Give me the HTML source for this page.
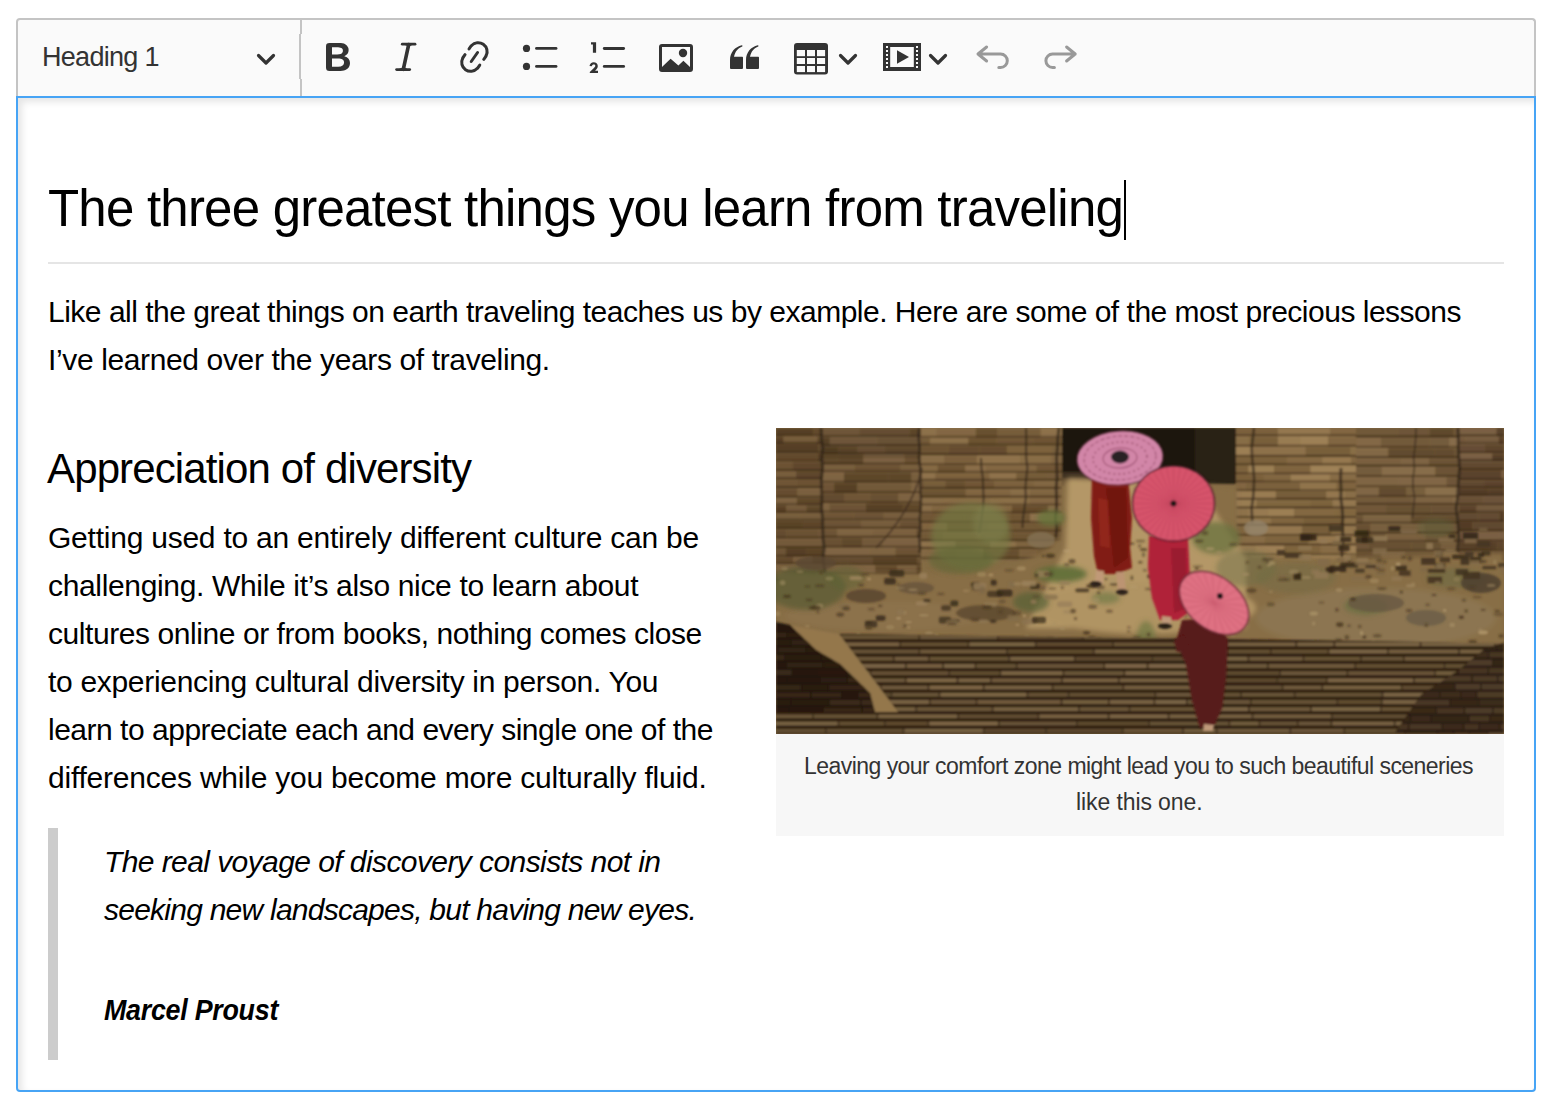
<!DOCTYPE html>
<html><head><meta charset="utf-8">
<style>
html,body{margin:0;padding:0;background:#fff;width:1556px;height:1112px;overflow:hidden;position:relative;font-family:"Liberation Sans",sans-serif;}
.abs{position:absolute;}
#toolbar{position:absolute;left:16px;top:18px;width:1516px;height:78px;background:#fafafa;border:2px solid #c4c4c4;border-bottom:none;border-radius:4px 4px 0 0;}
#editable{position:absolute;left:16px;top:96px;width:1516px;height:992px;border:2px solid #47a4f5;border-radius:0 0 4px 4px;box-shadow:inset 4px 4px 7px rgba(0,0,0,.1);background:#fff;}
.t{position:absolute;white-space:nowrap;color:#000;line-height:1;}
.p{font-size:30px;}
.bq{font-size:30px;font-style:italic;}
</style></head><body>
<div id="toolbar"></div>
<div id="editable"></div>
<svg class="abs" style="left:0;top:0" width="1556" height="100" viewBox="0 0 1556 100">
<rect x="300" y="20" width="2" height="14" fill="#c4c4c4"/><rect x="299" y="34" width="2" height="45" fill="#c4c4c4"/><rect x="300" y="79" width="2" height="17" fill="#c4c4c4"/>
<g fill="none" stroke="#333" stroke-width="3.2" stroke-linecap="round" stroke-linejoin="round">
<path d="M258.5 55.5 L266 63 L273.5 55.5"/>
<path d="M840.5 55.5 L848 63 L855.5 55.5"/>
<path d="M930.5 55.5 L938 63 L945.5 55.5"/>
</g>
<g fill="#333">
<path transform="translate(318,37) scale(2)" d="M10.187 17H5.773c-.637 0-1.092-.138-1.364-.415-.273-.277-.409-.718-.409-1.323V4.738c0-.617.14-1.062.419-1.332.279-.27.73-.406 1.354-.406h4.68c.69 0 1.288.041 1.793.124.506.083.96.242 1.36.478.341.197.644.447.906.75a3.262 3.262 0 0 1 .808 2.162c0 1.401-.722 2.426-2.167 3.075C15.05 10.175 16 11.315 16 13.01a3.756 3.756 0 0 1-2.296 3.504 6.1 6.1 0 0 1-1.517.377c-.571.073-1.238.11-2 .11zm-.217-6.217H7v4.087h3.069c1.977 0 2.965-.69 2.965-2.072 0-.707-.256-1.22-.768-1.537-.512-.319-1.277-.478-2.296-.478zM7 5.13v3.619h2.606c.729 0 1.292-.067 1.69-.2a1.6 1.6 0 0 0 .91-.765c.165-.267.247-.566.247-.897 0-.707-.26-1.176-.778-1.409-.519-.232-1.31-.348-2.375-.348H7z"/>
</g>
<g fill="none" stroke="#333" stroke-linecap="round" stroke-linejoin="round">
<path d="M402.3 44.2 L415 44.2" stroke-width="2.8"/>
<path d="M396.6 69.6 L409.7 69.6" stroke-width="2.8"/>
<path d="M408.7 44.5 L403.3 69.3" stroke-width="3.6"/>
<path d="M405.5 44.5 C407.8 44.8 408.6 46.5 408.0 48.5 M411.5 44.5 C409.6 44.8 408.9 46.2 408.6 47.5 M400.0 69.3 C402.2 69.0 403.2 67.8 403.8 66.0 M406.5 69.3 C404.8 69.0 404.2 67.6 404.3 66.5" stroke-width="1.4" fill="none"/>
</g>
<path fill="#333" transform="translate(454.4,37) scale(2)" d="M11.077 15l.991-1.416a.75.75 0 1 1 1.229.86l-1.148 1.64a.748.748 0 0 1-.217.206 5.251 5.251 0 0 1-8.503-5.955.741.741 0 0 1 .12-.274l1.147-1.639a.75.75 0 1 1 1.228.86L4.933 10.7l.006.003a3.75 3.75 0 0 0 6.132 4.294l.006.004zm5.494-5.335a.748.748 0 0 1-.12.274l-1.147 1.639a.75.75 0 1 1-1.228-.86l.86-1.23a3.75 3.75 0 0 0-6.144-4.301l-.86 1.229a.75.75 0 0 1-1.229-.86l1.148-1.64a.748.748 0 0 1 .217-.206 5.251 5.251 0 0 1 8.503 5.955zm-4.563-2.532a.75.75 0 0 1 .184 1.045l-3.155 4.505a.75.75 0 1 1-1.229-.86l3.155-4.506a.75.75 0 0 1 1.045-.184z"/>
<g fill="#333">
<circle cx="526.5" cy="48.4" r="3.6"/><circle cx="526.5" cy="66.4" r="3.6"/>
</g>
<g stroke="#333" stroke-width="2.9" stroke-linecap="round" fill="none">
<path d="M536.5 48.4 H556"/><path d="M536.5 66.4 H556"/>
<path d="M604.3 48.5 H623.6"/><path d="M604.3 66.4 H623.6"/>
</g>
<path fill="#333" d="M591 42.3 L596.1 42.3 L596.1 52.8 L592.9 52.8 L592.9 44.6 L591 44.6 Z"/>
<path fill="#333" d="M589.5 65.9 C589.9 63.7 591.6 62.2 593.6 62.2 C596.0 62.2 597.8 63.8 597.8 66.0 C597.8 67.6 596.9 68.9 595.6 70.2 L595.0 70.8 L598.0 70.8 L598.0 72.9 L589.8 72.9 L589.8 71.9 L593.9 68.0 C594.9 67.1 595.3 66.5 595.3 65.8 C595.3 64.9 594.6 64.4 593.7 64.4 C592.8 64.4 592.1 65.0 591.8 66.2 Z"/>
<rect x="660.5" y="45.5" width="31" height="25" rx="1.5" fill="none" stroke="#333" stroke-width="3"/>
<circle cx="683" cy="53" r="4.2" fill="#333"/>
<path fill="#333" d="M662 67 L670.6 58.8 L678.4 65.4 L683.4 60.8 L690 67 L690 70 L662 70 Z"/>
<g fill="#333">
<path d="M730 68 L730 60 C730 52.5 735 46.8 741.8 45.3 C742.5 45.2 742.8 46.2 742.2 46.5 C738.2 48 735 51.5 734 56.8 L742 56.8 C742.6 56.8 743 57.2 743 57.8 L743 68 C743 68.6 742.6 68.9 742 68.9 L731 68.9 C730.4 68.9 730 68.6 730 68 Z"/>
<path d="M746 68 L746 60 C746 52.5 751 46.8 757.8 45.3 C758.5 45.2 758.8 46.2 758.2 46.5 C754.2 48 751 51.5 750 56.8 L758 56.8 C758.6 56.8 759 57.2 759 57.8 L759 68 C759 68.6 758.6 68.9 758 68.9 L747 68.9 C746.4 68.9 746 68.6 746 68 Z"/>
</g>
<rect x="794" y="43" width="34" height="31.5" rx="3" fill="#333"/>
<g fill="#fafafa">
<rect x="796.8" y="50" width="8.2" height="6.2"/><rect x="807" y="50" width="8" height="6.2"/><rect x="817" y="50" width="8.1" height="6.2"/>
<rect x="796.8" y="58" width="8.2" height="6"/><rect x="807" y="58" width="8" height="6"/><rect x="817" y="58" width="8.1" height="6"/>
<rect x="796.8" y="66" width="8.2" height="6.1"/><rect x="807" y="66" width="8" height="6.1"/><rect x="817" y="66" width="8.1" height="6.1"/>
</g>
<rect x="883" y="43" width="38" height="28" fill="#333"/>
<rect x="890.2" y="47" width="23.6" height="20" fill="#fafafa"/>
<path d="M897 50.2 L909 57 L897 63.8 Z" fill="#333"/>
<g fill="#fafafa">
<rect x="886" y="46" width="2" height="2"/><rect x="886" y="50" width="2" height="2"/><rect x="886" y="54" width="2" height="2"/><rect x="886" y="58" width="2" height="2"/><rect x="886" y="62" width="2" height="2"/><rect x="886" y="66" width="2" height="2"/>
<rect x="916" y="46" width="2" height="2"/><rect x="916" y="50" width="2" height="2"/><rect x="916" y="54" width="2" height="2"/><rect x="916" y="58" width="2" height="2"/><rect x="916" y="62" width="2" height="2"/><rect x="916" y="66" width="2" height="2"/>
</g>
<g fill="none" stroke="#999" stroke-width="3" stroke-linecap="round" stroke-linejoin="round">
<path d="M986.6 47 L978 54 L986.6 61 M978 54 L1000.6 54 A6.7 6.7 0 0 1 1000.6 67.4 L998.8 67.4"/>
<path d="M1066.6 47 L1075.2 54 L1066.6 61 M1075.2 54 L1052.6 54 A6.7 6.7 0 0 0 1052.6 67.4 L1054.4 67.4"/>
</g>
</svg>
<div class="t" id="hd1" style="left:42px;top:43.5px;font-size:27px;letter-spacing:-0.7px;color:#333;">Heading 1</div>

<div class="t" id="h1" style="left:48px;top:183px;font-size:51px;letter-spacing:-0.78px;">The three greatest things you learn from traveling</div>
<div class="abs" style="left:1124px;top:180px;width:2px;height:60px;background:#000;"></div>
<div class="abs" style="left:48px;top:262px;width:1456px;height:2px;background:#e5e5e5;"></div>
<div class="t p" id="p1" style="left:48px;top:296.6px;font-size:30px;letter-spacing:-0.495px;">Like all the great things on earth traveling teaches us by example. Here are some of the most precious lessons</div>
<div class="t p" id="p2" style="left:48px;top:344.6px;font-size:30px;letter-spacing:-0.37px;">I&rsquo;ve learned over the years of traveling.</div>
<div class="t" id="h2" style="left:47px;top:448.2px;font-size:42px;letter-spacing:-0.87px;">Appreciation of diversity</div>
<div class="t p" id="l1" style="left:48px;top:522.6px;font-size:30px;letter-spacing:-0.235px;">Getting used to an entirely different culture can be</div>
<div class="t p" id="l2" style="left:48px;top:570.6px;font-size:30px;letter-spacing:-0.34px;">challenging. While it&rsquo;s also nice to learn about</div>
<div class="t p" id="l3" style="left:48px;top:618.6px;font-size:30px;letter-spacing:-0.43px;">cultures online or from books, nothing comes close</div>
<div class="t p" id="l4" style="left:48px;top:666.6px;font-size:30px;letter-spacing:-0.31px;">to experiencing cultural diversity in person. You</div>
<div class="t p" id="l5" style="left:48px;top:714.6px;font-size:30px;letter-spacing:-0.49px;">learn to appreciate each and every single one of the</div>
<div class="t p" id="l6" style="left:48px;top:762.6px;font-size:30px;letter-spacing:-0.22px;">differences while you become more culturally fluid.</div>
<div class="abs" style="left:48px;top:828px;width:10px;height:232px;background:#ccc;"></div>
<div class="t bq" id="q1" style="left:104px;top:846.6px;font-size:30px;letter-spacing:-0.58px;">The real voyage of discovery consists not in</div>
<div class="t bq" id="q2" style="left:104px;top:894.6px;font-size:30px;letter-spacing:-0.76px;">seeking new landscapes, but having new eyes.</div>
<div class="t bq" id="q3" style="left:104px;top:994.6px;font-size:30px;letter-spacing:-0.3px;font-weight:bold;transform:scaleX(0.895);transform-origin:0 0;">Marcel Proust</div>
<div class="abs" style="left:776px;top:734px;width:728px;height:102px;background:#f7f7f7;"></div>
<svg class="abs" id="photosvg" style="left:776px;top:428px" width="728" height="306" viewBox="0 0 728 306">
<defs><filter id="sf" x="-5%" y="-5%" width="110%" height="110%"><feGaussianBlur stdDeviation="0.8"/></filter><filter id="sf2" x="-20%" y="-20%" width="140%" height="140%"><feGaussianBlur stdDeviation="2.5"/></filter><filter id="sf3" x="-20%" y="-20%" width="140%" height="140%"><feGaussianBlur stdDeviation="5"/></filter><clipPath id="cp"><rect width="728" height="306"/></clipPath></defs>
<g clip-path="url(#cp)">
<rect width="728" height="306" fill="#8a7048"/>
<g filter="url(#sf)">
<rect x="0.0" y="0.0" width="37.6" height="8.5" fill="#594125"/>
<rect x="37.6" y="0.0" width="9.4" height="8.5" fill="#664c2f"/>
<rect x="0.0" y="6.3" width="47.0" height="2.2" fill="#3a2814" opacity="0.47"/>
<rect x="0.0" y="0.0" width="47.0" height="1.2" fill="#c9a77c" opacity="0.12"/>
<rect x="0.0" y="8.5" width="7.6" height="7.6" fill="#594126"/>
<rect x="7.6" y="8.5" width="33.7" height="7.6" fill="#7a5e3e"/>
<rect x="41.3" y="8.5" width="5.7" height="7.6" fill="#5f472a"/>
<rect x="0.0" y="13.9" width="47.0" height="2.2" fill="#3a2814" opacity="0.64"/>
<rect x="0.0" y="8.5" width="47.0" height="1.2" fill="#c9a77c" opacity="0.17"/>
<rect x="0.0" y="16.1" width="42.2" height="9.2" fill="#584025"/>
<rect x="42.2" y="16.1" width="4.8" height="9.2" fill="#62492d"/>
<rect x="0.0" y="23.1" width="47.0" height="2.2" fill="#3a2814" opacity="0.49"/>
<rect x="0.0" y="16.1" width="47.0" height="1.2" fill="#c9a77c" opacity="0.07"/>
<rect x="0.0" y="25.3" width="0.2" height="8.4" fill="#6f5536"/>
<rect x="0.2" y="25.3" width="41.6" height="8.4" fill="#664c2f"/>
<rect x="41.8" y="25.3" width="5.2" height="8.4" fill="#584025"/>
<rect x="0.0" y="31.5" width="47.0" height="2.2" fill="#3a2814" opacity="0.47"/>
<rect x="0.0" y="25.3" width="47.0" height="1.2" fill="#c9a77c" opacity="0.08"/>
<rect x="0.0" y="33.7" width="16.8" height="9.5" fill="#6f5536"/>
<rect x="16.8" y="33.7" width="30.2" height="9.5" fill="#634a2d"/>
<rect x="0.0" y="41.1" width="47.0" height="2.2" fill="#3a2814" opacity="0.69"/>
<rect x="0.0" y="33.7" width="47.0" height="1.2" fill="#c9a77c" opacity="0.14"/>
<rect x="0.0" y="43.3" width="20.2" height="8.2" fill="#7c6040"/>
<rect x="20.2" y="43.3" width="26.8" height="8.2" fill="#62492d"/>
<rect x="0.0" y="49.3" width="47.0" height="2.2" fill="#3a2814" opacity="0.74"/>
<rect x="0.0" y="43.3" width="47.0" height="1.2" fill="#c9a77c" opacity="0.07"/>
<rect x="0.0" y="51.5" width="0.9" height="8.8" fill="#6b5133"/>
<rect x="0.9" y="51.5" width="19.5" height="8.8" fill="#735839"/>
<rect x="20.4" y="51.5" width="26.6" height="8.8" fill="#6f5436"/>
<rect x="0.0" y="58.1" width="47.0" height="2.2" fill="#3a2814" opacity="0.71"/>
<rect x="0.0" y="51.5" width="47.0" height="1.2" fill="#c9a77c" opacity="0.09"/>
<rect x="0.0" y="60.3" width="21.6" height="9.6" fill="#6a5032"/>
<rect x="21.6" y="60.3" width="25.4" height="9.6" fill="#7f6342"/>
<rect x="0.0" y="67.7" width="47.0" height="2.2" fill="#3a2814" opacity="0.59"/>
<rect x="0.0" y="60.3" width="47.0" height="1.2" fill="#c9a77c" opacity="0.14"/>
<rect x="0.0" y="69.9" width="20.9" height="7.7" fill="#816544"/>
<rect x="20.9" y="69.9" width="26.1" height="7.7" fill="#62492c"/>
<rect x="0.0" y="75.3" width="47.0" height="2.2" fill="#3a2814" opacity="0.57"/>
<rect x="0.0" y="69.9" width="47.0" height="1.2" fill="#c9a77c" opacity="0.14"/>
<rect x="0.0" y="77.5" width="10.4" height="7.6" fill="#5b4227"/>
<rect x="10.4" y="77.5" width="20.2" height="7.6" fill="#775c3c"/>
<rect x="30.5" y="77.5" width="16.5" height="7.6" fill="#60482b"/>
<rect x="0.0" y="82.9" width="47.0" height="2.2" fill="#3a2814" opacity="0.57"/>
<rect x="0.0" y="77.5" width="47.0" height="1.2" fill="#c9a77c" opacity="0.16"/>
<rect x="0.0" y="85.1" width="24.9" height="7.7" fill="#7c6140"/>
<rect x="24.9" y="85.1" width="22.1" height="7.7" fill="#7c6040"/>
<rect x="0.0" y="90.6" width="47.0" height="2.2" fill="#3a2814" opacity="0.53"/>
<rect x="0.0" y="85.1" width="47.0" height="1.2" fill="#c9a77c" opacity="0.10"/>
<rect x="0.0" y="92.8" width="26.9" height="8.6" fill="#5c4428"/>
<rect x="26.9" y="92.8" width="20.1" height="8.6" fill="#60472b"/>
<rect x="0.0" y="99.2" width="47.0" height="2.2" fill="#3a2814" opacity="0.52"/>
<rect x="0.0" y="92.8" width="47.0" height="1.2" fill="#c9a77c" opacity="0.11"/>
<rect x="0.0" y="101.4" width="10.3" height="9.3" fill="#684e31"/>
<rect x="10.3" y="101.4" width="31.7" height="9.3" fill="#6e5436"/>
<rect x="41.9" y="101.4" width="5.1" height="9.3" fill="#74593a"/>
<rect x="0.0" y="108.5" width="47.0" height="2.2" fill="#3a2814" opacity="0.60"/>
<rect x="0.0" y="101.4" width="47.0" height="1.2" fill="#c9a77c" opacity="0.13"/>
<rect x="0.0" y="110.7" width="47.0" height="9.5" fill="#785d3d"/>
<rect x="0.0" y="118.0" width="47.0" height="2.2" fill="#3a2814" opacity="0.71"/>
<rect x="0.0" y="110.7" width="47.0" height="1.2" fill="#c9a77c" opacity="0.15"/>
<rect x="0.0" y="120.2" width="9.9" height="8.7" fill="#715738"/>
<rect x="9.9" y="120.2" width="20.3" height="8.7" fill="#584025"/>
<rect x="30.2" y="120.2" width="16.8" height="8.7" fill="#5d4428"/>
<rect x="0.0" y="126.7" width="47.0" height="2.2" fill="#3a2814" opacity="0.55"/>
<rect x="0.0" y="120.2" width="47.0" height="1.2" fill="#c9a77c" opacity="0.06"/>
<rect x="0.0" y="128.9" width="17.2" height="7.5" fill="#654c2f"/>
<rect x="17.2" y="128.9" width="18.9" height="7.5" fill="#7c6040"/>
<rect x="36.2" y="128.9" width="10.8" height="7.5" fill="#5c4428"/>
<rect x="0.0" y="134.2" width="47.0" height="2.2" fill="#3a2814" opacity="0.53"/>
<rect x="0.0" y="128.9" width="47.0" height="1.2" fill="#c9a77c" opacity="0.10"/>
<rect x="0.0" y="136.4" width="45.7" height="8.6" fill="#816544"/>
<rect x="45.7" y="136.4" width="1.3" height="8.6" fill="#6b5133"/>
<rect x="0.0" y="142.8" width="47.0" height="2.2" fill="#3a2814" opacity="0.48"/>
<rect x="0.0" y="136.4" width="47.0" height="1.2" fill="#c9a77c" opacity="0.06"/>
<rect x="0.0" y="145.0" width="40.7" height="8.5" fill="#5d4428"/>
<rect x="40.7" y="145.0" width="6.3" height="8.5" fill="#7f6342"/>
<rect x="0.0" y="151.3" width="47.0" height="2.2" fill="#3a2814" opacity="0.61"/>
<rect x="0.0" y="145.0" width="47.0" height="1.2" fill="#c9a77c" opacity="0.07"/>
<rect x="47.0" y="0.0" width="36.7" height="9.1" fill="#856846"/>
<rect x="83.7" y="0.0" width="49.9" height="9.1" fill="#785d3d"/>
<rect x="133.7" y="0.0" width="11.3" height="9.1" fill="#6a5032"/>
<rect x="47.0" y="6.9" width="98.0" height="2.2" fill="#3a2814" opacity="0.50"/>
<rect x="47.0" y="0.0" width="98.0" height="1.2" fill="#c9a77c" opacity="0.15"/>
<rect x="47.0" y="9.1" width="6.8" height="9.1" fill="#634b2d"/>
<rect x="53.8" y="9.1" width="48.0" height="9.1" fill="#856947"/>
<rect x="101.9" y="9.1" width="43.1" height="9.1" fill="#7d6241"/>
<rect x="47.0" y="16.0" width="98.0" height="2.2" fill="#3a2814" opacity="0.70"/>
<rect x="47.0" y="9.1" width="98.0" height="1.2" fill="#c9a77c" opacity="0.15"/>
<rect x="47.0" y="18.2" width="15.6" height="8.2" fill="#5b4327"/>
<rect x="62.6" y="18.2" width="19.0" height="8.2" fill="#664d2f"/>
<rect x="81.7" y="18.2" width="27.6" height="8.2" fill="#785d3d"/>
<rect x="109.2" y="18.2" width="35.8" height="8.2" fill="#6d5335"/>
<rect x="47.0" y="24.2" width="98.0" height="2.2" fill="#3a2814" opacity="0.73"/>
<rect x="47.0" y="18.2" width="98.0" height="1.2" fill="#c9a77c" opacity="0.18"/>
<rect x="47.0" y="26.4" width="15.2" height="10.4" fill="#634b2d"/>
<rect x="62.2" y="26.4" width="25.3" height="10.4" fill="#624a2d"/>
<rect x="87.5" y="26.4" width="41.1" height="10.4" fill="#816544"/>
<rect x="128.6" y="26.4" width="16.4" height="10.4" fill="#6f5536"/>
<rect x="47.0" y="34.6" width="98.0" height="2.2" fill="#3a2814" opacity="0.65"/>
<rect x="47.0" y="26.4" width="98.0" height="1.2" fill="#c9a77c" opacity="0.15"/>
<rect x="47.0" y="36.8" width="31.8" height="7.8" fill="#7c6140"/>
<rect x="78.8" y="36.8" width="45.8" height="7.8" fill="#6f5536"/>
<rect x="124.6" y="36.8" width="20.4" height="7.8" fill="#7c6140"/>
<rect x="47.0" y="42.3" width="98.0" height="2.2" fill="#3a2814" opacity="0.55"/>
<rect x="47.0" y="36.8" width="98.0" height="1.2" fill="#c9a77c" opacity="0.15"/>
<rect x="47.0" y="44.5" width="21.0" height="10.4" fill="#836745"/>
<rect x="68.0" y="44.5" width="44.8" height="10.4" fill="#61482c"/>
<rect x="112.8" y="44.5" width="22.7" height="10.4" fill="#60482b"/>
<rect x="135.5" y="44.5" width="9.5" height="10.4" fill="#7d6241"/>
<rect x="47.0" y="52.7" width="98.0" height="2.2" fill="#3a2814" opacity="0.49"/>
<rect x="47.0" y="44.5" width="98.0" height="1.2" fill="#c9a77c" opacity="0.16"/>
<rect x="47.0" y="54.9" width="11.2" height="10.4" fill="#725738"/>
<rect x="58.2" y="54.9" width="22.8" height="10.4" fill="#5a4226"/>
<rect x="81.1" y="54.9" width="53.9" height="10.4" fill="#765b3b"/>
<rect x="135.0" y="54.9" width="10.0" height="10.4" fill="#836745"/>
<rect x="47.0" y="63.2" width="98.0" height="2.2" fill="#3a2814" opacity="0.58"/>
<rect x="47.0" y="54.9" width="98.0" height="1.2" fill="#c9a77c" opacity="0.16"/>
<rect x="47.0" y="65.4" width="21.0" height="10.0" fill="#664d30"/>
<rect x="68.0" y="65.4" width="26.9" height="10.0" fill="#735939"/>
<rect x="94.9" y="65.4" width="27.6" height="10.0" fill="#6c5234"/>
<rect x="122.5" y="65.4" width="22.5" height="10.0" fill="#826644"/>
<rect x="47.0" y="73.2" width="98.0" height="2.2" fill="#3a2814" opacity="0.56"/>
<rect x="47.0" y="65.4" width="98.0" height="1.2" fill="#c9a77c" opacity="0.11"/>
<rect x="47.0" y="75.4" width="6.4" height="9.3" fill="#826644"/>
<rect x="53.4" y="75.4" width="36.6" height="9.3" fill="#715738"/>
<rect x="90.0" y="75.4" width="37.4" height="9.3" fill="#5a4227"/>
<rect x="127.4" y="75.4" width="17.6" height="9.3" fill="#62492c"/>
<rect x="47.0" y="82.4" width="98.0" height="2.2" fill="#3a2814" opacity="0.45"/>
<rect x="47.0" y="75.4" width="98.0" height="1.2" fill="#c9a77c" opacity="0.15"/>
<rect x="47.0" y="84.6" width="30.6" height="8.0" fill="#725838"/>
<rect x="77.6" y="84.6" width="30.1" height="8.0" fill="#705637"/>
<rect x="107.7" y="84.6" width="37.3" height="8.0" fill="#7c6140"/>
<rect x="47.0" y="90.4" width="98.0" height="2.2" fill="#3a2814" opacity="0.48"/>
<rect x="47.0" y="84.6" width="98.0" height="1.2" fill="#c9a77c" opacity="0.12"/>
<rect x="47.0" y="92.6" width="38.3" height="8.2" fill="#705637"/>
<rect x="85.3" y="92.6" width="38.8" height="8.2" fill="#7b603f"/>
<rect x="124.1" y="92.6" width="20.9" height="8.2" fill="#6d5335"/>
<rect x="47.0" y="98.7" width="98.0" height="2.2" fill="#3a2814" opacity="0.63"/>
<rect x="47.0" y="92.6" width="98.0" height="1.2" fill="#c9a77c" opacity="0.12"/>
<rect x="47.0" y="100.9" width="14.0" height="9.0" fill="#715738"/>
<rect x="61.0" y="100.9" width="35.7" height="9.0" fill="#836745"/>
<rect x="96.6" y="100.9" width="43.9" height="9.0" fill="#806443"/>
<rect x="140.5" y="100.9" width="4.5" height="9.0" fill="#654c2f"/>
<rect x="47.0" y="107.7" width="98.0" height="2.2" fill="#3a2814" opacity="0.62"/>
<rect x="47.0" y="100.9" width="98.0" height="1.2" fill="#c9a77c" opacity="0.17"/>
<rect x="47.0" y="109.9" width="18.4" height="10.0" fill="#6d5335"/>
<rect x="65.4" y="109.9" width="20.7" height="10.0" fill="#644b2e"/>
<rect x="86.1" y="109.9" width="20.7" height="10.0" fill="#775c3c"/>
<rect x="106.8" y="109.9" width="38.2" height="10.0" fill="#816544"/>
<rect x="47.0" y="117.7" width="98.0" height="2.2" fill="#3a2814" opacity="0.50"/>
<rect x="47.0" y="109.9" width="98.0" height="1.2" fill="#c9a77c" opacity="0.14"/>
<rect x="47.0" y="119.9" width="46.4" height="9.5" fill="#846846"/>
<rect x="93.4" y="119.9" width="26.1" height="9.5" fill="#836745"/>
<rect x="119.5" y="119.9" width="25.5" height="9.5" fill="#6f5536"/>
<rect x="47.0" y="127.2" width="98.0" height="2.2" fill="#3a2814" opacity="0.75"/>
<rect x="47.0" y="119.9" width="98.0" height="1.2" fill="#c9a77c" opacity="0.16"/>
<rect x="47.0" y="129.4" width="24.1" height="8.0" fill="#684f31"/>
<rect x="71.1" y="129.4" width="25.2" height="8.0" fill="#684e31"/>
<rect x="96.4" y="129.4" width="44.7" height="8.0" fill="#5a4227"/>
<rect x="141.1" y="129.4" width="3.9" height="8.0" fill="#6d5335"/>
<rect x="47.0" y="135.2" width="98.0" height="2.2" fill="#3a2814" opacity="0.46"/>
<rect x="47.0" y="129.4" width="98.0" height="1.2" fill="#c9a77c" opacity="0.09"/>
<rect x="47.0" y="137.4" width="5.0" height="9.4" fill="#856947"/>
<rect x="52.0" y="137.4" width="47.2" height="9.4" fill="#846846"/>
<rect x="99.2" y="137.4" width="21.9" height="9.4" fill="#654c2f"/>
<rect x="121.1" y="137.4" width="19.5" height="9.4" fill="#7c6140"/>
<rect x="140.5" y="137.4" width="4.5" height="9.4" fill="#5f472a"/>
<rect x="47.0" y="144.6" width="98.0" height="2.2" fill="#3a2814" opacity="0.58"/>
<rect x="47.0" y="137.4" width="98.0" height="1.2" fill="#c9a77c" opacity="0.17"/>
<rect x="145.0" y="0.0" width="15.8" height="10.0" fill="#92744d"/>
<rect x="160.8" y="0.0" width="39.1" height="10.0" fill="#886b46"/>
<rect x="199.9" y="0.0" width="21.3" height="10.0" fill="#6c5231"/>
<rect x="221.2" y="0.0" width="43.5" height="10.0" fill="#7c613d"/>
<rect x="264.7" y="0.0" width="20.7" height="10.0" fill="#93754e"/>
<rect x="285.3" y="0.0" width="0.7" height="10.0" fill="#8d6f49"/>
<rect x="145.0" y="7.8" width="141.0" height="2.2" fill="#3a2814" opacity="0.48"/>
<rect x="145.0" y="0.0" width="141.0" height="1.2" fill="#c9a77c" opacity="0.16"/>
<rect x="145.0" y="10.0" width="8.9" height="7.7" fill="#785d3a"/>
<rect x="153.9" y="10.0" width="38.5" height="7.7" fill="#92744e"/>
<rect x="192.4" y="10.0" width="27.9" height="7.7" fill="#6f5533"/>
<rect x="220.3" y="10.0" width="37.5" height="7.7" fill="#745937"/>
<rect x="257.8" y="10.0" width="22.0" height="7.7" fill="#715634"/>
<rect x="279.8" y="10.0" width="6.2" height="7.7" fill="#725836"/>
<rect x="145.0" y="15.5" width="141.0" height="2.2" fill="#3a2814" opacity="0.54"/>
<rect x="145.0" y="10.0" width="141.0" height="1.2" fill="#c9a77c" opacity="0.09"/>
<rect x="145.0" y="17.7" width="27.8" height="9.8" fill="#715735"/>
<rect x="172.8" y="17.7" width="30.8" height="9.8" fill="#6a5030"/>
<rect x="203.6" y="17.7" width="27.3" height="9.8" fill="#6a5030"/>
<rect x="230.9" y="17.7" width="45.1" height="9.8" fill="#826641"/>
<rect x="276.0" y="17.7" width="10.0" height="9.8" fill="#7e633f"/>
<rect x="145.0" y="25.2" width="141.0" height="2.2" fill="#3a2814" opacity="0.73"/>
<rect x="145.0" y="17.7" width="141.0" height="1.2" fill="#c9a77c" opacity="0.06"/>
<rect x="145.0" y="27.4" width="23.3" height="10.0" fill="#8e714b"/>
<rect x="168.3" y="27.4" width="32.5" height="10.0" fill="#806440"/>
<rect x="200.9" y="27.4" width="43.4" height="10.0" fill="#95774f"/>
<rect x="244.3" y="27.4" width="30.7" height="10.0" fill="#8e714a"/>
<rect x="275.0" y="27.4" width="11.0" height="10.0" fill="#856944"/>
<rect x="145.0" y="35.2" width="141.0" height="2.2" fill="#3a2814" opacity="0.57"/>
<rect x="145.0" y="27.4" width="141.0" height="1.2" fill="#c9a77c" opacity="0.10"/>
<rect x="145.0" y="37.4" width="16.7" height="7.7" fill="#8a6d47"/>
<rect x="161.7" y="37.4" width="27.5" height="7.7" fill="#715634"/>
<rect x="189.2" y="37.4" width="21.1" height="7.7" fill="#8f714b"/>
<rect x="210.3" y="37.4" width="50.2" height="7.7" fill="#876a45"/>
<rect x="260.5" y="37.4" width="25.5" height="7.7" fill="#745937"/>
<rect x="145.0" y="42.9" width="141.0" height="2.2" fill="#3a2814" opacity="0.54"/>
<rect x="145.0" y="37.4" width="141.0" height="1.2" fill="#c9a77c" opacity="0.11"/>
<rect x="145.0" y="45.1" width="14.4" height="8.0" fill="#94764f"/>
<rect x="159.4" y="45.1" width="54.0" height="8.0" fill="#826541"/>
<rect x="213.4" y="45.1" width="27.0" height="8.0" fill="#94764f"/>
<rect x="240.4" y="45.1" width="29.5" height="8.0" fill="#795e3b"/>
<rect x="269.9" y="45.1" width="16.1" height="8.0" fill="#7a5f3c"/>
<rect x="145.0" y="50.8" width="141.0" height="2.2" fill="#3a2814" opacity="0.59"/>
<rect x="145.0" y="45.1" width="141.0" height="1.2" fill="#c9a77c" opacity="0.12"/>
<rect x="145.0" y="53.0" width="3.0" height="8.1" fill="#755a38"/>
<rect x="148.0" y="53.0" width="21.3" height="8.1" fill="#7b603c"/>
<rect x="169.4" y="53.0" width="19.5" height="8.1" fill="#6a5130"/>
<rect x="188.9" y="53.0" width="29.3" height="8.1" fill="#745937"/>
<rect x="218.2" y="53.0" width="39.7" height="8.1" fill="#816540"/>
<rect x="257.8" y="53.0" width="28.2" height="8.1" fill="#866a45"/>
<rect x="145.0" y="58.9" width="141.0" height="2.2" fill="#3a2814" opacity="0.66"/>
<rect x="145.0" y="53.0" width="141.0" height="1.2" fill="#c9a77c" opacity="0.16"/>
<rect x="145.0" y="61.1" width="44.7" height="8.7" fill="#705634"/>
<rect x="189.7" y="61.1" width="44.8" height="8.7" fill="#866944"/>
<rect x="234.4" y="61.1" width="19.6" height="8.7" fill="#8e714b"/>
<rect x="254.1" y="61.1" width="31.9" height="8.7" fill="#856944"/>
<rect x="145.0" y="67.6" width="141.0" height="2.2" fill="#3a2814" opacity="0.67"/>
<rect x="145.0" y="61.1" width="141.0" height="1.2" fill="#c9a77c" opacity="0.16"/>
<rect x="145.0" y="69.8" width="20.9" height="7.9" fill="#8e714b"/>
<rect x="165.9" y="69.8" width="47.8" height="7.9" fill="#8e704a"/>
<rect x="213.7" y="69.8" width="39.6" height="7.9" fill="#91734c"/>
<rect x="253.3" y="69.8" width="32.7" height="7.9" fill="#886b46"/>
<rect x="145.0" y="75.5" width="141.0" height="2.2" fill="#3a2814" opacity="0.52"/>
<rect x="145.0" y="69.8" width="141.0" height="1.2" fill="#c9a77c" opacity="0.05"/>
<rect x="145.0" y="77.7" width="11.1" height="7.9" fill="#8e714b"/>
<rect x="156.1" y="77.7" width="38.7" height="7.9" fill="#856944"/>
<rect x="194.7" y="77.7" width="41.2" height="7.9" fill="#876b45"/>
<rect x="235.9" y="77.7" width="36.1" height="7.9" fill="#6a502f"/>
<rect x="272.0" y="77.7" width="14.0" height="7.9" fill="#8a6d48"/>
<rect x="145.0" y="83.4" width="141.0" height="2.2" fill="#3a2814" opacity="0.60"/>
<rect x="145.0" y="77.7" width="141.0" height="1.2" fill="#c9a77c" opacity="0.12"/>
<rect x="145.0" y="85.6" width="43.3" height="9.5" fill="#755a37"/>
<rect x="188.3" y="85.6" width="20.8" height="9.5" fill="#755a38"/>
<rect x="209.0" y="85.6" width="45.0" height="9.5" fill="#735836"/>
<rect x="254.0" y="85.6" width="32.0" height="9.5" fill="#94764f"/>
<rect x="145.0" y="92.9" width="141.0" height="2.2" fill="#3a2814" opacity="0.60"/>
<rect x="145.0" y="85.6" width="141.0" height="1.2" fill="#c9a77c" opacity="0.10"/>
<rect x="145.0" y="95.1" width="25.9" height="8.9" fill="#856843"/>
<rect x="170.9" y="95.1" width="41.8" height="8.9" fill="#6d5332"/>
<rect x="212.6" y="95.1" width="23.5" height="8.9" fill="#755a37"/>
<rect x="236.1" y="95.1" width="45.5" height="8.9" fill="#775c39"/>
<rect x="281.6" y="95.1" width="4.4" height="8.9" fill="#6a502f"/>
<rect x="145.0" y="101.8" width="141.0" height="2.2" fill="#3a2814" opacity="0.47"/>
<rect x="145.0" y="95.1" width="141.0" height="1.2" fill="#c9a77c" opacity="0.08"/>
<rect x="145.0" y="104.0" width="22.2" height="9.5" fill="#765b39"/>
<rect x="167.2" y="104.0" width="37.1" height="9.5" fill="#7e623e"/>
<rect x="204.3" y="104.0" width="35.3" height="9.5" fill="#6f5433"/>
<rect x="239.6" y="104.0" width="46.4" height="9.5" fill="#725836"/>
<rect x="145.0" y="111.3" width="141.0" height="2.2" fill="#3a2814" opacity="0.74"/>
<rect x="145.0" y="104.0" width="141.0" height="1.2" fill="#c9a77c" opacity="0.17"/>
<rect x="145.0" y="113.5" width="34.6" height="7.6" fill="#94764f"/>
<rect x="179.6" y="113.5" width="34.6" height="7.6" fill="#755a38"/>
<rect x="214.2" y="113.5" width="25.8" height="7.6" fill="#93754e"/>
<rect x="240.0" y="113.5" width="25.8" height="7.6" fill="#836742"/>
<rect x="265.8" y="113.5" width="20.2" height="7.6" fill="#816440"/>
<rect x="145.0" y="118.9" width="141.0" height="2.2" fill="#3a2814" opacity="0.74"/>
<rect x="145.0" y="113.5" width="141.0" height="1.2" fill="#c9a77c" opacity="0.07"/>
<rect x="145.0" y="121.1" width="35.6" height="10.0" fill="#886c46"/>
<rect x="180.6" y="121.1" width="26.6" height="10.0" fill="#91734d"/>
<rect x="207.1" y="121.1" width="36.0" height="10.0" fill="#6b5130"/>
<rect x="243.1" y="121.1" width="18.1" height="10.0" fill="#7f633f"/>
<rect x="261.2" y="121.1" width="24.8" height="10.0" fill="#775c39"/>
<rect x="145.0" y="128.9" width="141.0" height="2.2" fill="#3a2814" opacity="0.49"/>
<rect x="145.0" y="121.1" width="141.0" height="1.2" fill="#c9a77c" opacity="0.09"/>
<rect x="460.0" y="0.0" width="41.9" height="8.4" fill="#80643f"/>
<rect x="501.9" y="0.0" width="52.3" height="8.4" fill="#9a7c53"/>
<rect x="554.2" y="0.0" width="25.8" height="8.4" fill="#876b45"/>
<rect x="460.0" y="6.2" width="120.0" height="2.2" fill="#3a2814" opacity="0.56"/>
<rect x="460.0" y="0.0" width="120.0" height="1.2" fill="#c9a77c" opacity="0.10"/>
<rect x="460.0" y="8.4" width="13.7" height="10.5" fill="#8d7149"/>
<rect x="473.7" y="8.4" width="28.2" height="10.5" fill="#7d623d"/>
<rect x="501.9" y="8.4" width="21.8" height="10.5" fill="#9f8157"/>
<rect x="523.6" y="8.4" width="28.6" height="10.5" fill="#a4855a"/>
<rect x="552.2" y="8.4" width="27.2" height="10.5" fill="#866a44"/>
<rect x="579.4" y="8.4" width="0.6" height="10.5" fill="#836741"/>
<rect x="460.0" y="16.7" width="120.0" height="2.2" fill="#3a2814" opacity="0.56"/>
<rect x="460.0" y="8.4" width="120.0" height="1.2" fill="#c9a77c" opacity="0.17"/>
<rect x="460.0" y="18.9" width="17.0" height="10.2" fill="#a38459"/>
<rect x="477.0" y="18.9" width="52.8" height="10.2" fill="#93754d"/>
<rect x="529.8" y="18.9" width="44.6" height="10.2" fill="#7d623d"/>
<rect x="574.4" y="18.9" width="5.6" height="10.2" fill="#8e724a"/>
<rect x="460.0" y="26.9" width="120.0" height="2.2" fill="#3a2814" opacity="0.68"/>
<rect x="460.0" y="18.9" width="120.0" height="1.2" fill="#c9a77c" opacity="0.13"/>
<rect x="460.0" y="29.1" width="50.8" height="8.4" fill="#80653f"/>
<rect x="510.8" y="29.1" width="35.5" height="8.4" fill="#8a6d46"/>
<rect x="546.3" y="29.1" width="29.0" height="8.4" fill="#9b7d53"/>
<rect x="575.3" y="29.1" width="4.7" height="8.4" fill="#866a44"/>
<rect x="460.0" y="35.3" width="120.0" height="2.2" fill="#3a2814" opacity="0.65"/>
<rect x="460.0" y="29.1" width="120.0" height="1.2" fill="#c9a77c" opacity="0.09"/>
<rect x="460.0" y="37.5" width="12.4" height="9.2" fill="#826640"/>
<rect x="472.4" y="37.5" width="25.7" height="9.2" fill="#a28459"/>
<rect x="498.1" y="37.5" width="36.4" height="9.2" fill="#846842"/>
<rect x="534.4" y="37.5" width="45.6" height="9.2" fill="#a6875c"/>
<rect x="460.0" y="44.4" width="120.0" height="2.2" fill="#3a2814" opacity="0.58"/>
<rect x="460.0" y="37.5" width="120.0" height="1.2" fill="#c9a77c" opacity="0.07"/>
<rect x="460.0" y="46.6" width="27.9" height="8.1" fill="#7f633e"/>
<rect x="487.9" y="46.6" width="26.8" height="8.1" fill="#866a44"/>
<rect x="514.8" y="46.6" width="39.1" height="8.1" fill="#a28358"/>
<rect x="553.9" y="46.6" width="26.1" height="8.1" fill="#8d7049"/>
<rect x="460.0" y="52.5" width="120.0" height="2.2" fill="#3a2814" opacity="0.57"/>
<rect x="460.0" y="46.6" width="120.0" height="1.2" fill="#c9a77c" opacity="0.12"/>
<rect x="460.0" y="54.7" width="10.2" height="8.6" fill="#876b44"/>
<rect x="470.2" y="54.7" width="53.8" height="8.6" fill="#80653f"/>
<rect x="524.0" y="54.7" width="36.6" height="8.6" fill="#967950"/>
<rect x="560.6" y="54.7" width="19.4" height="8.6" fill="#846842"/>
<rect x="460.0" y="61.1" width="120.0" height="2.2" fill="#3a2814" opacity="0.53"/>
<rect x="460.0" y="54.7" width="120.0" height="1.2" fill="#c9a77c" opacity="0.08"/>
<rect x="460.0" y="63.3" width="39.9" height="8.7" fill="#a08157"/>
<rect x="499.9" y="63.3" width="50.3" height="8.7" fill="#7b613c"/>
<rect x="550.2" y="63.3" width="19.2" height="8.7" fill="#9a7c52"/>
<rect x="569.4" y="63.3" width="10.6" height="8.7" fill="#8f724b"/>
<rect x="460.0" y="69.8" width="120.0" height="2.2" fill="#3a2814" opacity="0.63"/>
<rect x="460.0" y="63.3" width="120.0" height="1.2" fill="#c9a77c" opacity="0.05"/>
<rect x="460.0" y="72.0" width="20.7" height="8.7" fill="#a08257"/>
<rect x="480.7" y="72.0" width="54.0" height="8.7" fill="#856a43"/>
<rect x="534.7" y="72.0" width="22.0" height="8.7" fill="#816640"/>
<rect x="556.7" y="72.0" width="23.3" height="8.7" fill="#997b52"/>
<rect x="460.0" y="78.5" width="120.0" height="2.2" fill="#3a2814" opacity="0.73"/>
<rect x="460.0" y="72.0" width="120.0" height="1.2" fill="#c9a77c" opacity="0.14"/>
<rect x="460.0" y="80.7" width="12.0" height="9.4" fill="#93764d"/>
<rect x="472.0" y="80.7" width="19.5" height="9.4" fill="#9d7f55"/>
<rect x="491.4" y="80.7" width="26.6" height="9.4" fill="#a38459"/>
<rect x="518.0" y="80.7" width="41.9" height="9.4" fill="#886c45"/>
<rect x="559.9" y="80.7" width="20.1" height="9.4" fill="#866a43"/>
<rect x="460.0" y="88.0" width="120.0" height="2.2" fill="#3a2814" opacity="0.64"/>
<rect x="460.0" y="80.7" width="120.0" height="1.2" fill="#c9a77c" opacity="0.14"/>
<rect x="460.0" y="90.2" width="35.3" height="7.8" fill="#94774e"/>
<rect x="495.3" y="90.2" width="32.4" height="7.8" fill="#846942"/>
<rect x="527.7" y="90.2" width="40.2" height="7.8" fill="#7b603b"/>
<rect x="567.9" y="90.2" width="12.1" height="7.8" fill="#8f724a"/>
<rect x="460.0" y="95.8" width="120.0" height="2.2" fill="#3a2814" opacity="0.74"/>
<rect x="460.0" y="90.2" width="120.0" height="1.2" fill="#c9a77c" opacity="0.13"/>
<rect x="460.0" y="98.0" width="12.4" height="10.2" fill="#856943"/>
<rect x="472.4" y="98.0" width="53.5" height="10.2" fill="#9a7c52"/>
<rect x="526.0" y="98.0" width="29.4" height="10.2" fill="#7b613c"/>
<rect x="555.3" y="98.0" width="24.7" height="10.2" fill="#987a51"/>
<rect x="460.0" y="105.9" width="120.0" height="2.2" fill="#3a2814" opacity="0.58"/>
<rect x="460.0" y="98.0" width="120.0" height="1.2" fill="#c9a77c" opacity="0.08"/>
<rect x="460.0" y="108.1" width="29.1" height="9.5" fill="#8d7049"/>
<rect x="489.1" y="108.1" width="43.3" height="9.5" fill="#836842"/>
<rect x="532.4" y="108.1" width="47.5" height="9.5" fill="#9b7d53"/>
<rect x="579.9" y="108.1" width="0.1" height="9.5" fill="#846842"/>
<rect x="460.0" y="115.4" width="120.0" height="2.2" fill="#3a2814" opacity="0.74"/>
<rect x="460.0" y="108.1" width="120.0" height="1.2" fill="#c9a77c" opacity="0.09"/>
<rect x="460.0" y="117.6" width="19.3" height="10.0" fill="#9c7e54"/>
<rect x="479.3" y="117.6" width="28.9" height="10.0" fill="#a4855a"/>
<rect x="508.2" y="117.6" width="36.3" height="10.0" fill="#836741"/>
<rect x="544.5" y="117.6" width="26.3" height="10.0" fill="#8d7049"/>
<rect x="570.8" y="117.6" width="9.2" height="10.0" fill="#a4855a"/>
<rect x="460.0" y="125.4" width="120.0" height="2.2" fill="#3a2814" opacity="0.49"/>
<rect x="460.0" y="117.6" width="120.0" height="1.2" fill="#c9a77c" opacity="0.10"/>
<rect x="460.0" y="127.6" width="14.3" height="8.1" fill="#8c6f48"/>
<rect x="474.3" y="127.6" width="51.2" height="8.1" fill="#a18358"/>
<rect x="525.5" y="127.6" width="45.1" height="8.1" fill="#a6875c"/>
<rect x="570.6" y="127.6" width="9.4" height="8.1" fill="#896d46"/>
<rect x="460.0" y="133.5" width="120.0" height="2.2" fill="#3a2814" opacity="0.51"/>
<rect x="460.0" y="127.6" width="120.0" height="1.2" fill="#c9a77c" opacity="0.17"/>
<rect x="580.0" y="0.0" width="41.6" height="9.7" fill="#745b3b"/>
<rect x="621.6" y="0.0" width="31.8" height="9.7" fill="#72593a"/>
<rect x="653.5" y="0.0" width="24.3" height="9.7" fill="#644c2f"/>
<rect x="677.7" y="0.0" width="5.3" height="9.7" fill="#735a3b"/>
<rect x="580.0" y="7.5" width="103.0" height="2.2" fill="#3a2814" opacity="0.74"/>
<rect x="580.0" y="0.0" width="103.0" height="1.2" fill="#c9a77c" opacity="0.07"/>
<rect x="580.0" y="9.7" width="25.0" height="10.4" fill="#886c4a"/>
<rect x="605.0" y="9.7" width="48.4" height="10.4" fill="#775d3d"/>
<rect x="653.4" y="9.7" width="19.8" height="10.4" fill="#785e3f"/>
<rect x="673.2" y="9.7" width="9.8" height="10.4" fill="#8c704d"/>
<rect x="580.0" y="17.9" width="103.0" height="2.2" fill="#3a2814" opacity="0.51"/>
<rect x="580.0" y="9.7" width="103.0" height="1.2" fill="#c9a77c" opacity="0.10"/>
<rect x="580.0" y="20.1" width="32.3" height="10.2" fill="#876c4a"/>
<rect x="612.3" y="20.1" width="46.4" height="10.2" fill="#654d30"/>
<rect x="658.7" y="20.1" width="19.3" height="10.2" fill="#664e31"/>
<rect x="677.9" y="20.1" width="5.1" height="10.2" fill="#6f5637"/>
<rect x="580.0" y="28.1" width="103.0" height="2.2" fill="#3a2814" opacity="0.67"/>
<rect x="580.0" y="20.1" width="103.0" height="1.2" fill="#c9a77c" opacity="0.17"/>
<rect x="580.0" y="30.3" width="45.3" height="8.5" fill="#7f6443"/>
<rect x="625.3" y="30.3" width="27.7" height="8.5" fill="#836847"/>
<rect x="653.0" y="30.3" width="29.7" height="8.5" fill="#705738"/>
<rect x="682.7" y="30.3" width="0.3" height="8.5" fill="#856a48"/>
<rect x="580.0" y="36.6" width="103.0" height="2.2" fill="#3a2814" opacity="0.72"/>
<rect x="580.0" y="30.3" width="103.0" height="1.2" fill="#c9a77c" opacity="0.13"/>
<rect x="580.0" y="38.8" width="25.9" height="10.3" fill="#785f3f"/>
<rect x="605.9" y="38.8" width="53.4" height="10.3" fill="#8d714e"/>
<rect x="659.3" y="38.8" width="23.7" height="10.3" fill="#6f5637"/>
<rect x="580.0" y="47.0" width="103.0" height="2.2" fill="#3a2814" opacity="0.58"/>
<rect x="580.0" y="38.8" width="103.0" height="1.2" fill="#c9a77c" opacity="0.11"/>
<rect x="580.0" y="49.2" width="42.2" height="10.3" fill="#846947"/>
<rect x="622.2" y="49.2" width="48.4" height="10.3" fill="#866a49"/>
<rect x="670.6" y="49.2" width="12.4" height="10.3" fill="#72593a"/>
<rect x="580.0" y="57.3" width="103.0" height="2.2" fill="#3a2814" opacity="0.55"/>
<rect x="580.0" y="49.2" width="103.0" height="1.2" fill="#c9a77c" opacity="0.10"/>
<rect x="580.0" y="59.5" width="22.9" height="9.8" fill="#856a48"/>
<rect x="602.9" y="59.5" width="27.2" height="9.8" fill="#664e31"/>
<rect x="630.1" y="59.5" width="19.3" height="9.8" fill="#7c6241"/>
<rect x="649.3" y="59.5" width="30.1" height="9.8" fill="#8f734f"/>
<rect x="679.4" y="59.5" width="3.6" height="9.8" fill="#8f7350"/>
<rect x="580.0" y="67.1" width="103.0" height="2.2" fill="#3a2814" opacity="0.53"/>
<rect x="580.0" y="59.5" width="103.0" height="1.2" fill="#c9a77c" opacity="0.06"/>
<rect x="580.0" y="69.3" width="29.3" height="7.8" fill="#775d3e"/>
<rect x="609.3" y="69.3" width="26.7" height="7.8" fill="#765c3d"/>
<rect x="636.0" y="69.3" width="41.0" height="7.8" fill="#816645"/>
<rect x="676.9" y="69.3" width="6.1" height="7.8" fill="#896d4b"/>
<rect x="580.0" y="74.9" width="103.0" height="2.2" fill="#3a2814" opacity="0.65"/>
<rect x="580.0" y="69.3" width="103.0" height="1.2" fill="#c9a77c" opacity="0.07"/>
<rect x="580.0" y="77.1" width="30.2" height="10.0" fill="#745a3b"/>
<rect x="610.2" y="77.1" width="45.3" height="10.0" fill="#6c5436"/>
<rect x="655.5" y="77.1" width="27.2" height="10.0" fill="#6e5537"/>
<rect x="682.6" y="77.1" width="0.4" height="10.0" fill="#8a6f4c"/>
<rect x="580.0" y="84.9" width="103.0" height="2.2" fill="#3a2814" opacity="0.62"/>
<rect x="580.0" y="77.1" width="103.0" height="1.2" fill="#c9a77c" opacity="0.09"/>
<rect x="580.0" y="87.1" width="7.0" height="8.7" fill="#6e5537"/>
<rect x="587.0" y="87.1" width="47.9" height="8.7" fill="#806645"/>
<rect x="634.9" y="87.1" width="48.1" height="8.7" fill="#685032"/>
<rect x="580.0" y="93.6" width="103.0" height="2.2" fill="#3a2814" opacity="0.59"/>
<rect x="580.0" y="87.1" width="103.0" height="1.2" fill="#c9a77c" opacity="0.16"/>
<rect x="580.0" y="95.8" width="14.5" height="10.0" fill="#6c5335"/>
<rect x="594.5" y="95.8" width="54.0" height="10.0" fill="#7d6342"/>
<rect x="648.5" y="95.8" width="34.5" height="10.0" fill="#745a3b"/>
<rect x="580.0" y="103.6" width="103.0" height="2.2" fill="#3a2814" opacity="0.71"/>
<rect x="580.0" y="95.8" width="103.0" height="1.2" fill="#c9a77c" opacity="0.11"/>
<rect x="580.0" y="105.8" width="29.7" height="8.3" fill="#685032"/>
<rect x="609.7" y="105.8" width="40.1" height="8.3" fill="#7f6443"/>
<rect x="649.7" y="105.8" width="26.1" height="8.3" fill="#745a3b"/>
<rect x="675.8" y="105.8" width="7.2" height="8.3" fill="#6c5436"/>
<rect x="580.0" y="111.9" width="103.0" height="2.2" fill="#3a2814" opacity="0.53"/>
<rect x="580.0" y="105.8" width="103.0" height="1.2" fill="#c9a77c" opacity="0.13"/>
<rect x="580.0" y="114.1" width="12.3" height="9.5" fill="#72593a"/>
<rect x="592.3" y="114.1" width="43.1" height="9.5" fill="#6c5335"/>
<rect x="635.4" y="114.1" width="29.6" height="9.5" fill="#6c5436"/>
<rect x="665.0" y="114.1" width="18.0" height="9.5" fill="#7c6141"/>
<rect x="580.0" y="121.4" width="103.0" height="2.2" fill="#3a2814" opacity="0.47"/>
<rect x="580.0" y="114.1" width="103.0" height="1.2" fill="#c9a77c" opacity="0.06"/>
<rect x="580.0" y="123.6" width="25.1" height="8.7" fill="#684f32"/>
<rect x="605.1" y="123.6" width="24.1" height="8.7" fill="#826746"/>
<rect x="629.2" y="123.6" width="33.2" height="8.7" fill="#705738"/>
<rect x="662.4" y="123.6" width="20.6" height="8.7" fill="#8d714e"/>
<rect x="580.0" y="130.0" width="103.0" height="2.2" fill="#3a2814" opacity="0.54"/>
<rect x="580.0" y="123.6" width="103.0" height="1.2" fill="#c9a77c" opacity="0.12"/>
<rect x="683.0" y="0.0" width="37.5" height="8.6" fill="#7f6347"/>
<rect x="720.5" y="0.0" width="7.5" height="8.6" fill="#5c442d"/>
<rect x="683.0" y="6.4" width="45.0" height="2.2" fill="#3a2814" opacity="0.67"/>
<rect x="683.0" y="0.0" width="45.0" height="1.2" fill="#c9a77c" opacity="0.08"/>
<rect x="683.0" y="8.6" width="6.6" height="7.5" fill="#785c41"/>
<rect x="689.6" y="8.6" width="33.0" height="7.5" fill="#7a5f43"/>
<rect x="722.7" y="8.6" width="5.3" height="7.5" fill="#5b422b"/>
<rect x="683.0" y="13.9" width="45.0" height="2.2" fill="#3a2814" opacity="0.45"/>
<rect x="683.0" y="8.6" width="45.0" height="1.2" fill="#c9a77c" opacity="0.12"/>
<rect x="683.0" y="16.1" width="25.7" height="9.4" fill="#6a5037"/>
<rect x="708.7" y="16.1" width="19.3" height="9.4" fill="#60472f"/>
<rect x="683.0" y="23.3" width="45.0" height="2.2" fill="#3a2814" opacity="0.61"/>
<rect x="683.0" y="16.1" width="45.0" height="1.2" fill="#c9a77c" opacity="0.17"/>
<rect x="683.0" y="25.5" width="33.1" height="7.8" fill="#7e6246"/>
<rect x="716.1" y="25.5" width="11.9" height="7.8" fill="#59412a"/>
<rect x="683.0" y="31.1" width="45.0" height="2.2" fill="#3a2814" opacity="0.73"/>
<rect x="683.0" y="25.5" width="45.0" height="1.2" fill="#c9a77c" opacity="0.18"/>
<rect x="683.0" y="33.3" width="45.0" height="8.9" fill="#654b33"/>
<rect x="683.0" y="40.1" width="45.0" height="2.2" fill="#3a2814" opacity="0.72"/>
<rect x="683.0" y="33.3" width="45.0" height="1.2" fill="#c9a77c" opacity="0.13"/>
<rect x="683.0" y="42.3" width="42.3" height="10.0" fill="#5d442d"/>
<rect x="725.3" y="42.3" width="2.7" height="10.0" fill="#795d42"/>
<rect x="683.0" y="50.1" width="45.0" height="2.2" fill="#3a2814" opacity="0.70"/>
<rect x="683.0" y="42.3" width="45.0" height="1.2" fill="#c9a77c" opacity="0.07"/>
<rect x="683.0" y="52.3" width="25.2" height="8.2" fill="#644b33"/>
<rect x="708.2" y="52.3" width="19.8" height="8.2" fill="#5e452e"/>
<rect x="683.0" y="58.2" width="45.0" height="2.2" fill="#3a2814" opacity="0.67"/>
<rect x="683.0" y="52.3" width="45.0" height="1.2" fill="#c9a77c" opacity="0.17"/>
<rect x="683.0" y="60.4" width="29.2" height="7.6" fill="#553d27"/>
<rect x="712.2" y="60.4" width="15.8" height="7.6" fill="#59402a"/>
<rect x="683.0" y="65.8" width="45.0" height="2.2" fill="#3a2814" opacity="0.63"/>
<rect x="683.0" y="60.4" width="45.0" height="1.2" fill="#c9a77c" opacity="0.12"/>
<rect x="683.0" y="68.0" width="24.4" height="9.4" fill="#6d5339"/>
<rect x="707.4" y="68.0" width="20.6" height="9.4" fill="#70563c"/>
<rect x="683.0" y="75.2" width="45.0" height="2.2" fill="#3a2814" opacity="0.58"/>
<rect x="683.0" y="68.0" width="45.0" height="1.2" fill="#c9a77c" opacity="0.11"/>
<rect x="683.0" y="77.4" width="17.5" height="7.6" fill="#5e452e"/>
<rect x="700.5" y="77.4" width="27.5" height="7.6" fill="#765b40"/>
<rect x="683.0" y="82.8" width="45.0" height="2.2" fill="#3a2814" opacity="0.59"/>
<rect x="683.0" y="77.4" width="45.0" height="1.2" fill="#c9a77c" opacity="0.07"/>
<rect x="683.0" y="85.0" width="19.5" height="8.9" fill="#664d34"/>
<rect x="702.5" y="85.0" width="21.4" height="8.9" fill="#674d35"/>
<rect x="723.9" y="85.0" width="4.1" height="8.9" fill="#553d27"/>
<rect x="683.0" y="91.7" width="45.0" height="2.2" fill="#3a2814" opacity="0.64"/>
<rect x="683.0" y="85.0" width="45.0" height="1.2" fill="#c9a77c" opacity="0.06"/>
<rect x="683.0" y="93.9" width="13.6" height="9.7" fill="#563e28"/>
<rect x="696.6" y="93.9" width="31.4" height="9.7" fill="#644b32"/>
<rect x="683.0" y="101.4" width="45.0" height="2.2" fill="#3a2814" opacity="0.74"/>
<rect x="683.0" y="93.9" width="45.0" height="1.2" fill="#c9a77c" opacity="0.07"/>
<rect x="683.0" y="103.6" width="15.2" height="10.1" fill="#775c41"/>
<rect x="698.2" y="103.6" width="25.2" height="10.1" fill="#7f6346"/>
<rect x="723.4" y="103.6" width="4.6" height="10.1" fill="#7e6246"/>
<rect x="683.0" y="111.5" width="45.0" height="2.2" fill="#3a2814" opacity="0.72"/>
<rect x="683.0" y="103.6" width="45.0" height="1.2" fill="#c9a77c" opacity="0.07"/>
<rect x="683.0" y="113.7" width="38.5" height="9.9" fill="#5a422b"/>
<rect x="721.5" y="113.7" width="6.5" height="9.9" fill="#60472f"/>
<rect x="683.0" y="121.3" width="45.0" height="2.2" fill="#3a2814" opacity="0.69"/>
<rect x="683.0" y="113.7" width="45.0" height="1.2" fill="#c9a77c" opacity="0.07"/>
<rect x="683.0" y="123.5" width="34.8" height="9.0" fill="#624831"/>
<rect x="717.8" y="123.5" width="10.2" height="9.0" fill="#5c432c"/>
<rect x="683.0" y="130.4" width="45.0" height="2.2" fill="#3a2814" opacity="0.50"/>
<rect x="683.0" y="123.5" width="45.0" height="1.2" fill="#c9a77c" opacity="0.17"/>
<rect x="47" y="0" width="98" height="30" fill="#3a2a1c" opacity=".25"/>
<polyline points="45.0,0.0 45.5,10.0 46.7,20.0 45.7,30.0 46.6,40.0 45.4,50.0 45.5,60.0 45.9,70.0 45.5,80.0 46.6,90.0 46.8,100.0 47.0,110.0 48.2,120.0 47.0,130.0 48.5,140.0 48.9,145.0" fill="none" stroke="#2e2218" stroke-width="3.0" opacity=".7"/>
<polyline points="143.0,0.0 142.7,10.0 143.6,20.0 142.9,30.0 144.3,40.0 144.6,50.0 144.2,60.0 144.9,70.0 144.8,80.0 143.8,90.0 144.5,100.0 143.2,110.0 144.1,120.0 143.4,125.0" fill="none" stroke="#2e2218" stroke-width="2.5" opacity=".7"/>
<polyline points="205.0,30.0 205.4,40.0 206.9,50.0 207.1,60.0 207.6,70.0 207.1,80.0 205.6,90.0 204.2,100.0 203.1,105.0" fill="none" stroke="#2e2218" stroke-width="2.0" opacity=".7"/>
<polyline points="250.0,0.0 250.3,10.0 250.1,20.0 250.2,30.0 251.4,40.0 250.3,50.0 249.4,60.0 249.9,70.0 248.5,80.0 247.0,90.0 246.5,100.0" fill="none" stroke="#2e2218" stroke-width="2.0" opacity=".7"/>
<polyline points="283.0,0.0 281.8,10.0 281.4,20.0 280.6,30.0 280.8,40.0 281.1,50.0 280.2,60.0 280.6,70.0 280.5,80.0 279.4,90.0 280.7,100.0 279.9,110.0" fill="none" stroke="#2e2218" stroke-width="3.0" opacity=".7"/>
<polyline points="478.0,0.0 476.9,10.0 475.7,20.0 476.1,30.0 477.3,40.0 478.1,50.0 477.8,60.0 477.1,70.0 475.6,80.0 476.1,90.0 476.3,95.0" fill="none" stroke="#2e2218" stroke-width="2.5" opacity=".7"/>
<polyline points="565.0,40.0 564.6,50.0 565.0,60.0 564.8,70.0 566.1,80.0 566.8,90.0 566.1,100.0 567.3,110.0 565.9,120.0 566.0,130.0" fill="none" stroke="#2e2218" stroke-width="3.0" opacity=".7"/>
<polyline points="640.0,0.0 639.7,10.0 638.9,20.0 637.6,30.0 638.4,40.0 637.0,50.0 637.1,60.0 638.5,70.0 637.4,80.0 636.5,90.0" fill="none" stroke="#2e2218" stroke-width="1.5" opacity=".7"/>
<polyline points="682.0,0.0 682.3,10.0 682.3,20.0 682.8,30.0 683.7,40.0 682.7,50.0 682.2,60.0 681.6,70.0 680.2,80.0 681.4,90.0 682.2,100.0 682.9,110.0 681.4,120.0 682.4,125.0" fill="none" stroke="#2e2218" stroke-width="3.0" opacity=".7"/>
<path d="M146 40 C140 70 120 100 100 120" fill="none" stroke="#3a2a1e" stroke-width="2" opacity=".6"/>
<rect x="286" y="0" width="174" height="50" fill="#1a130c"/>
<rect x="286" y="0" width="174" height="10" fill="#1a130d"/>
<rect x="413" y="0" width="6" height="50" fill="#1a140f"/>
<rect x="419" y="0" width="41" height="56" fill="#2a2018"/>
<rect x="286" y="44" width="130" height="14" fill="#4a3a26" opacity=".8"/>
</g>
<g filter="url(#sf2)">
<path d="M0 142 L47 145 L145 146 L236 140 L270 122 L286 108 L286 52 L420 56 L460 60 L460 128 L560 130 L690 126 L728 124 L728 218 L645 220 L63 208 L0 196 Z" fill="#8e7248"/>
<path d="M292 50 L420 55 L470 130 L470 200 L250 200 L290 120 Z" fill="#bc9e6c"/>
<ellipse cx="370" cy="180" rx="110" ry="26" fill="#b89a68"/>
<ellipse cx="600" cy="190" rx="120" ry="30" fill="#927a54"/>
<ellipse cx="110" cy="188" rx="100" ry="14" fill="#927650"/>
</g>
<g filter="url(#sf2)">
<ellipse cx="195" cy="108" rx="40" ry="34" fill="#7c8248" opacity="0.60"/>
<ellipse cx="185" cy="132" rx="32" ry="14" fill="#646a38" opacity="0.60"/>
<ellipse cx="215" cy="95" rx="18" ry="20" fill="#8a8e55" opacity="0.40"/>
<ellipse cx="30" cy="160" rx="40" ry="22" fill="#545a30" opacity="0.60"/>
<ellipse cx="70" cy="150" rx="18" ry="12" fill="#60663a" opacity="0.50"/>
<ellipse cx="275" cy="90" rx="14" ry="8" fill="#6a7a40" opacity="0.80"/>
<ellipse cx="285" cy="146" rx="26" ry="8" fill="#5c6e36" opacity="0.85"/>
<ellipse cx="255" cy="174" rx="18" ry="10" fill="#5a6538" opacity="0.70"/>
<ellipse cx="330" cy="170" rx="14" ry="6" fill="#6d7c45" opacity="0.60"/>
<ellipse cx="440" cy="110" rx="24" ry="16" fill="#6c7642" opacity="0.75"/>
<ellipse cx="470" cy="140" rx="30" ry="18" fill="#70744a" opacity="0.45"/>
<ellipse cx="520" cy="150" rx="40" ry="16" fill="#6f7048" opacity="0.35"/>
<ellipse cx="590" cy="178" rx="22" ry="9" fill="#667040" opacity="0.60"/>
<ellipse cx="680" cy="150" rx="30" ry="10" fill="#6c6e48" opacity="0.50"/>
<ellipse cx="370" cy="215" rx="10" ry="22" fill="#6f7a44" opacity="0.70"/>
<ellipse cx="660" cy="100" rx="18" ry="10" fill="#60683e" opacity="0.40"/>
</g>
<g filter="url(#sf)">
<ellipse cx="210" cy="185" rx="30" ry="8" fill="#5e4a30" opacity=".8"/>
<ellipse cx="90" cy="168" rx="20" ry="7" fill="#5a4630" opacity=".8"/>
<ellipse cx="265" cy="112" rx="14" ry="8" fill="#8a7658" opacity=".8"/>
<ellipse cx="650" cy="190" rx="20" ry="8" fill="#6e604a" opacity=".8"/>
<ellipse cx="140" cy="160" rx="18" ry="6" fill="#6a5640" opacity=".8"/>
<ellipse cx="40" cy="135" rx="20" ry="7" fill="#5e4a34" opacity=".8"/>
<ellipse cx="480" cy="100" rx="12" ry="8" fill="#9a8a70" opacity=".8"/>
<ellipse cx="705" cy="155" rx="20" ry="10" fill="#4e4030" opacity=".8"/>
<ellipse cx="600" cy="175" rx="28" ry="9" fill="#6a5a44" opacity=".8"/>
<rect x="669.9" y="120.6" width="8.7" height="3.4" fill="#8a714e" opacity=".85"/>
<rect x="553.0" y="97.1" width="14.3" height="6.4" fill="#413220" opacity=".85"/>
<rect x="662.3" y="109.6" width="15.5" height="5.1" fill="#89704e" opacity=".85"/>
<rect x="560.5" y="130.3" width="16.6" height="3.1" fill="#816948" opacity=".85"/>
<rect x="559.4" y="108.0" width="15.0" height="4.3" fill="#9c815c" opacity=".85"/>
<rect x="700.7" y="113.1" width="13.6" height="5.8" fill="#453523" opacity=".85"/>
<rect x="651.7" y="148.8" width="14.4" height="6.4" fill="#443422" opacity=".85"/>
<rect x="599.7" y="134.9" width="8.5" height="5.5" fill="#856c4a" opacity=".85"/>
<rect x="517.7" y="145.1" width="7.3" height="6.7" fill="#302213" opacity=".85"/>
<rect x="578.6" y="102.8" width="14.3" height="5.5" fill="#302313" opacity=".85"/>
<rect x="658.9" y="135.5" width="10.4" height="6.3" fill="#3e2e1d" opacity=".85"/>
<rect x="686.9" y="144.0" width="17.0" height="6.8" fill="#443422" opacity=".85"/>
<rect x="524.4" y="106.3" width="16.2" height="6.2" fill="#302213" opacity=".85"/>
<rect x="644.6" y="140.4" width="7.2" height="3.4" fill="#846c4a" opacity=".85"/>
<rect x="672.7" y="106.3" width="6.3" height="4.0" fill="#3a2b1a" opacity=".85"/>
<rect x="564.4" y="134.4" width="17.6" height="5.0" fill="#372918" opacity=".85"/>
<rect x="694.1" y="129.0" width="11.2" height="6.1" fill="#392b1a" opacity=".85"/>
<rect x="579.1" y="133.8" width="16.3" height="3.4" fill="#816948" opacity=".85"/>
<rect x="686.9" y="104.4" width="15.1" height="6.9" fill="#342616" opacity=".85"/>
<rect x="501.0" y="122.0" width="8.2" height="5.0" fill="#433321" opacity=".85"/>
<rect x="579.2" y="140.8" width="9.4" height="3.9" fill="#463623" opacity=".85"/>
<rect x="659.5" y="122.4" width="7.0" height="6.2" fill="#3f2f1e" opacity=".85"/>
<rect x="659.0" y="138.3" width="10.8" height="4.6" fill="#866e4c" opacity=".85"/>
<rect x="703.0" y="99.7" width="8.5" height="4.1" fill="#7a6343" opacity=".85"/>
<rect x="705.5" y="122.6" width="8.8" height="4.8" fill="#453522" opacity=".85"/>
<rect x="621.2" y="136.5" width="10.2" height="4.3" fill="#917753" opacity=".85"/>
<rect x="535.4" y="141.4" width="8.0" height="4.8" fill="#947a56" opacity=".85"/>
<rect x="676.3" y="126.9" width="16.6" height="4.0" fill="#3b2c1b" opacity=".85"/>
<rect x="543.7" y="111.6" width="7.9" height="3.6" fill="#987e59" opacity=".85"/>
<rect x="556.4" y="113.0" width="9.9" height="3.8" fill="#7f6846" opacity=".85"/>
<rect x="722.3" y="135.1" width="7.2" height="4.5" fill="#473624" opacity=".85"/>
<rect x="724.3" y="138.7" width="8.4" height="5.6" fill="#89704e" opacity=".85"/>
<rect x="524.4" y="106.4" width="10.8" height="6.2" fill="#302213" opacity=".85"/>
<rect x="658.1" y="122.5" width="7.7" height="5.4" fill="#8a714f" opacity=".85"/>
<rect x="592.3" y="135.8" width="12.9" height="6.0" fill="#89704e" opacity=".85"/>
<rect x="596.0" y="107.6" width="15.3" height="5.8" fill="#997f5a" opacity=".85"/>
<rect x="694.4" y="132.4" width="9.8" height="5.5" fill="#8a714e" opacity=".85"/>
<rect x="522.3" y="118.1" width="13.6" height="4.0" fill="#937955" opacity=".85"/>
<rect x="596.6" y="120.0" width="14.1" height="6.7" fill="#88704d" opacity=".85"/>
<rect x="541.7" y="131.0" width="11.9" height="6.9" fill="#876f4c" opacity=".85"/>
<rect x="508.7" y="124.9" width="17.3" height="5.1" fill="#423321" opacity=".85"/>
<rect x="523.0" y="126.6" width="12.1" height="5.6" fill="#937a55" opacity=".85"/>
<rect x="689.0" y="123.7" width="8.5" height="5.7" fill="#463624" opacity=".85"/>
<rect x="589.5" y="136.9" width="10.3" height="3.2" fill="#473724" opacity=".85"/>
<rect x="562.6" y="117.0" width="11.0" height="5.8" fill="#3a2b1a" opacity=".85"/>
<rect x="580.3" y="109.6" width="17.3" height="5.1" fill="#413220" opacity=".85"/>
<rect x="549.9" y="139.1" width="7.6" height="6.1" fill="#352616" opacity=".85"/>
<rect x="684.6" y="129.9" width="8.7" height="6.9" fill="#3d2e1d" opacity=".85"/>
<rect x="580.5" y="130.1" width="11.6" height="4.2" fill="#977d58" opacity=".85"/>
<rect x="625.0" y="101.9" width="16.2" height="4.1" fill="#866e4c" opacity=".85"/>
<rect x="585.8" y="108.9" width="6.0" height="5.9" fill="#342616" opacity=".85"/>
<rect x="564.1" y="108.5" width="11.1" height="5.5" fill="#3b2c1b" opacity=".85"/>
<rect x="650.3" y="114.9" width="6.7" height="6.3" fill="#987e59" opacity=".85"/>
<rect x="706.5" y="138.1" width="13.6" height="3.1" fill="#433421" opacity=".85"/>
<rect x="502.6" y="147.3" width="7.2" height="3.6" fill="#836a49" opacity=".85"/>
<rect x="553.3" y="137.7" width="16.8" height="6.2" fill="#332515" opacity=".85"/>
<rect x="538.3" y="144.0" width="14.0" height="6.6" fill="#967c57" opacity=".85"/>
<rect x="679.7" y="141.1" width="12.4" height="6.0" fill="#40311f" opacity=".85"/>
<rect x="600.0" y="143.5" width="8.8" height="3.6" fill="#836b49" opacity=".85"/>
<rect x="612.4" y="98.2" width="11.9" height="5.0" fill="#332515" opacity=".85"/>
<rect x="623.0" y="142.5" width="11.6" height="5.3" fill="#443422" opacity=".85"/>
<rect x="651.7" y="141.2" width="17.5" height="3.3" fill="#3a2b1a" opacity=".85"/>
<rect x="645.2" y="130.0" width="14.2" height="6.7" fill="#3e2f1d" opacity=".85"/>
<rect x="575.3" y="149.0" width="16.8" height="3.1" fill="#8b724f" opacity=".85"/>
<rect x="663.7" y="129.4" width="10.4" height="4.9" fill="#443422" opacity=".85"/>
<rect x="619.8" y="137.4" width="11.1" height="5.2" fill="#3a2b1a" opacity=".85"/>
<rect x="688.5" y="111.1" width="12.0" height="4.1" fill="#886f4d" opacity=".85"/>
<rect x="615.5" y="148.6" width="10.0" height="4.3" fill="#967c57" opacity=".85"/>
<rect x="568.2" y="127.3" width="6.5" height="5.9" fill="#967c57" opacity=".85"/>
<rect x="701.9" y="125.0" width="6.1" height="3.8" fill="#372818" opacity=".85"/>
<rect x="281.1" y="173.5" width="15.1" height="5.4" rx="2" fill="#a0865f" opacity=".8"/>
<rect x="208.0" y="174.5" width="12.8" height="3.9" rx="2" fill="#99805a" opacity=".8"/>
<rect x="220.1" y="165.2" width="7.8" height="3.1" rx="2" fill="#87704d" opacity=".8"/>
<rect x="245.9" y="190.3" width="14.2" height="6.1" rx="2" fill="#917854" opacity=".8"/>
<rect x="194.9" y="154.2" width="9.2" height="4.7" rx="2" fill="#3c2e1c" opacity=".8"/>
<rect x="214.0" y="191.4" width="6.4" height="3.5" rx="2" fill="#3f311f" opacity=".8"/>
<rect x="254.5" y="171.6" width="6.1" height="4.5" rx="2" fill="#947b56" opacity=".8"/>
<rect x="202.1" y="191.6" width="10.1" height="3.4" rx="2" fill="#957c57" opacity=".8"/>
<rect x="214.7" y="151.7" width="6.0" height="5.7" rx="2" fill="#322515" opacity=".8"/>
<rect x="89.2" y="193.1" width="7.3" height="3.1" rx="2" fill="#463724" opacity=".8"/>
<rect x="232.6" y="153.3" width="6.5" height="6.1" rx="2" fill="#8a724f" opacity=".8"/>
<rect x="231.3" y="187.1" width="12.3" height="5.8" rx="2" fill="#876f4c" opacity=".8"/>
<rect x="170.5" y="191.3" width="13.2" height="3.0" rx="2" fill="#493a26" opacity=".8"/>
<rect x="63.5" y="175.8" width="9.1" height="5.9" rx="2" fill="#866f4c" opacity=".8"/>
<rect x="99.8" y="187.4" width="9.7" height="5.3" rx="2" fill="#332616" opacity=".8"/>
<rect x="165.3" y="177.2" width="9.6" height="5.6" rx="2" fill="#453623" opacity=".8"/>
<rect x="211.1" y="163.0" width="15.4" height="6.1" rx="2" fill="#443623" opacity=".8"/>
<rect x="196.0" y="156.1" width="13.0" height="6.3" rx="2" fill="#493a26" opacity=".8"/>
<rect x="139.7" y="173.3" width="12.0" height="4.2" rx="2" fill="#a18760" opacity=".8"/>
<rect x="162.9" y="188.8" width="12.0" height="6.6" rx="2" fill="#423321" opacity=".8"/>
<rect x="253.8" y="155.6" width="10.2" height="5.3" rx="2" fill="#382a19" opacity=".8"/>
<rect x="255.8" y="188.8" width="14.1" height="6.5" rx="2" fill="#453723" opacity=".8"/>
<rect x="197.3" y="155.1" width="12.8" height="6.7" rx="2" fill="#a18660" opacity=".8"/>
<rect x="143.2" y="144.7" width="8.0" height="6.0" rx="2" fill="#a08660" opacity=".8"/>
<rect x="283.6" y="152.9" width="10.7" height="3.8" rx="2" fill="#9c825c" opacity=".8"/>
<rect x="121.1" y="181.3" width="6.9" height="6.2" rx="2" fill="#947b56" opacity=".8"/>
<rect x="245.3" y="152.8" width="14.9" height="5.1" rx="2" fill="#a48962" opacity=".8"/>
<rect x="174.4" y="172.4" width="7.8" height="5.8" rx="2" fill="#362918" opacity=".8"/>
<rect x="147.1" y="171.0" width="7.5" height="3.2" rx="2" fill="#3e301e" opacity=".8"/>
<rect x="299.3" y="160.6" width="13.9" height="3.6" rx="2" fill="#413220" opacity=".8"/>
<rect x="203.3" y="159.0" width="6.3" height="7.0" rx="2" fill="#846d4b" opacity=".8"/>
<rect x="267.9" y="166.7" width="13.8" height="4.7" rx="2" fill="#8d7551" opacity=".8"/>
<rect x="287.2" y="182.2" width="8.5" height="3.2" rx="2" fill="#a68c64" opacity=".8"/>
<rect x="108.2" y="149.9" width="11.6" height="6.5" rx="2" fill="#332615" opacity=".8"/>
<rect x="170.0" y="192.1" width="12.0" height="4.6" rx="2" fill="#866e4c" opacity=".8"/>
<rect x="88.8" y="192.8" width="12.4" height="6.8" rx="2" fill="#3f311f" opacity=".8"/>
<rect x="220.7" y="161.6" width="15.7" height="7.0" rx="2" fill="#352817" opacity=".8"/>
<rect x="113.2" y="142.1" width="15.0" height="6.6" rx="2" fill="#3a2c1b" opacity=".8"/>
<rect x="260.9" y="142.6" width="12.5" height="6.9" rx="2" fill="#9d835d" opacity=".8"/>
<rect x="73.4" y="148.0" width="12.8" height="4.2" rx="2" fill="#a58b63" opacity=".8"/>
</g>
<g filter="url(#sf)">
<ellipse cx="430.6" cy="187.2" rx="2.4" ry="1.2" fill="#402f1a" opacity="0.52"/>
<ellipse cx="104.2" cy="177.9" rx="2.2" ry="1.1" fill="#4c3922" opacity="0.67"/>
<ellipse cx="160.6" cy="207.4" rx="2.0" ry="1.7" fill="#c4aa7b" opacity="0.38"/>
<ellipse cx="676.2" cy="196.9" rx="2.7" ry="2.2" fill="#b79e71" opacity="0.52"/>
<ellipse cx="457.3" cy="116.4" rx="4.0" ry="1.8" fill="#382814" opacity="0.40"/>
<ellipse cx="633.9" cy="130.6" rx="2.4" ry="2.3" fill="#3b2a16" opacity="0.47"/>
<ellipse cx="122.2" cy="156.5" rx="1.9" ry="2.5" fill="#523e27" opacity="0.37"/>
<ellipse cx="651.6" cy="176.9" rx="2.5" ry="1.4" fill="#45331d" opacity="0.42"/>
<ellipse cx="265.2" cy="214.0" rx="1.8" ry="1.4" fill="#c5ab7c" opacity="0.66"/>
<ellipse cx="41.8" cy="183.5" rx="1.6" ry="2.2" fill="#544028" opacity="0.47"/>
<ellipse cx="605.9" cy="160.6" rx="4.7" ry="1.3" fill="#44321c" opacity="0.55"/>
<ellipse cx="560.9" cy="181.8" rx="1.8" ry="1.9" fill="#392814" opacity="0.52"/>
<ellipse cx="445.9" cy="181.4" rx="2.2" ry="1.1" fill="#bba274" opacity="0.61"/>
<ellipse cx="297.1" cy="183.0" rx="2.7" ry="2.3" fill="#4f3c24" opacity="0.65"/>
<ellipse cx="358.9" cy="101.8" rx="4.6" ry="1.4" fill="#b89f72" opacity="0.42"/>
<ellipse cx="605.4" cy="142.2" rx="3.6" ry="1.0" fill="#42301b" opacity="0.53"/>
<ellipse cx="324.5" cy="159.3" rx="4.4" ry="2.3" fill="#4c3922" opacity="0.46"/>
<ellipse cx="517.7" cy="143.9" rx="4.6" ry="2.4" fill="#ab9469" opacity="0.52"/>
<ellipse cx="373.7" cy="161.0" rx="4.9" ry="1.3" fill="#372713" opacity="0.41"/>
<ellipse cx="70.2" cy="180.4" rx="3.6" ry="1.9" fill="#372613" opacity="0.53"/>
<ellipse cx="633.0" cy="182.5" rx="3.2" ry="1.8" fill="#3a2915" opacity="0.45"/>
<ellipse cx="88.8" cy="146.6" rx="4.5" ry="1.2" fill="#483620" opacity="0.55"/>
<ellipse cx="601.3" cy="207.8" rx="4.4" ry="1.8" fill="#43311c" opacity="0.49"/>
<ellipse cx="685.3" cy="189.3" rx="2.7" ry="1.7" fill="#3e2c18" opacity="0.69"/>
<ellipse cx="585.6" cy="205.0" rx="1.7" ry="1.8" fill="#c3a97a" opacity="0.69"/>
<ellipse cx="680.2" cy="128.7" rx="2.8" ry="1.8" fill="#493720" opacity="0.37"/>
<ellipse cx="315.3" cy="158.0" rx="4.9" ry="2.2" fill="#3b2a15" opacity="0.68"/>
<ellipse cx="461.0" cy="193.1" rx="1.6" ry="2.0" fill="#c4aa7b" opacity="0.44"/>
<ellipse cx="493.9" cy="131.4" rx="3.7" ry="1.4" fill="#523f27" opacity="0.53"/>
<ellipse cx="315.7" cy="209.3" rx="3.8" ry="1.2" fill="#402e19" opacity="0.56"/>
<ellipse cx="696.0" cy="159.1" rx="3.4" ry="1.2" fill="#44331d" opacity="0.39"/>
<ellipse cx="296.0" cy="133.2" rx="3.4" ry="2.3" fill="#392814" opacity="0.56"/>
<ellipse cx="415.1" cy="174.8" rx="3.1" ry="1.8" fill="#4c3922" opacity="0.56"/>
<ellipse cx="341.4" cy="135.7" rx="3.3" ry="1.6" fill="#3d2c17" opacity="0.55"/>
<ellipse cx="8.6" cy="140.6" rx="3.4" ry="1.7" fill="#b1986d" opacity="0.45"/>
<ellipse cx="718.9" cy="134.0" rx="1.7" ry="2.3" fill="#ae966b" opacity="0.50"/>
<ellipse cx="45.1" cy="144.6" rx="1.9" ry="1.3" fill="#4d3a23" opacity="0.69"/>
<ellipse cx="245.3" cy="140.5" rx="4.5" ry="2.2" fill="#bca375" opacity="0.53"/>
<ellipse cx="537.8" cy="185.5" rx="4.2" ry="2.1" fill="#b89f72" opacity="0.67"/>
<ellipse cx="92.7" cy="200.1" rx="3.6" ry="1.7" fill="#4d3b23" opacity="0.69"/>
<ellipse cx="416.4" cy="148.1" rx="3.6" ry="1.6" fill="#c4aa7b" opacity="0.51"/>
<ellipse cx="333.4" cy="183.2" rx="3.4" ry="1.6" fill="#42311b" opacity="0.46"/>
<ellipse cx="573.0" cy="197.7" rx="2.1" ry="1.5" fill="#44321c" opacity="0.40"/>
<ellipse cx="418.9" cy="166.9" rx="2.6" ry="2.3" fill="#523f27" opacity="0.64"/>
<ellipse cx="310.5" cy="204.7" rx="3.5" ry="1.7" fill="#382713" opacity="0.67"/>
<ellipse cx="563.1" cy="161.9" rx="3.3" ry="2.0" fill="#b9a073" opacity="0.49"/>
<ellipse cx="260.4" cy="168.4" rx="3.9" ry="1.8" fill="#534028" opacity="0.38"/>
<ellipse cx="272.6" cy="146.1" rx="4.6" ry="2.4" fill="#48351f" opacity="0.52"/>
<ellipse cx="320.4" cy="171.8" rx="3.4" ry="2.2" fill="#b49b6f" opacity="0.41"/>
<ellipse cx="231.6" cy="212.5" rx="1.9" ry="2.3" fill="#b9a073" opacity="0.59"/>
<ellipse cx="597.4" cy="213.9" rx="2.0" ry="1.4" fill="#b69d71" opacity="0.53"/>
<ellipse cx="367.6" cy="121.6" rx="3.6" ry="1.5" fill="#493720" opacity="0.70"/>
<ellipse cx="299.5" cy="190.6" rx="1.5" ry="1.5" fill="#4b3922" opacity="0.64"/>
<ellipse cx="426.8" cy="176.8" rx="3.4" ry="1.4" fill="#45331d" opacity="0.58"/>
<ellipse cx="386.9" cy="214.7" rx="1.9" ry="1.2" fill="#43311b" opacity="0.62"/>
<ellipse cx="124.2" cy="160.1" rx="4.3" ry="1.1" fill="#bca375" opacity="0.35"/>
<ellipse cx="561.0" cy="137.1" rx="2.1" ry="1.4" fill="#b49c6f" opacity="0.38"/>
<ellipse cx="658.0" cy="167.0" rx="2.8" ry="1.1" fill="#44321c" opacity="0.66"/>
<ellipse cx="424.2" cy="210.4" rx="2.4" ry="1.1" fill="#493720" opacity="0.68"/>
<ellipse cx="622.2" cy="136.2" rx="2.6" ry="1.9" fill="#c2a87a" opacity="0.69"/>
<ellipse cx="360.8" cy="209.2" rx="4.0" ry="1.3" fill="#42311b" opacity="0.46"/>
<ellipse cx="637.2" cy="155.7" rx="2.1" ry="1.5" fill="#b1996d" opacity="0.42"/>
<ellipse cx="707.3" cy="133.4" rx="3.4" ry="1.6" fill="#3a2915" opacity="0.49"/>
<ellipse cx="601.2" cy="140.4" rx="2.5" ry="1.4" fill="#3c2b17" opacity="0.36"/>
<ellipse cx="483.6" cy="139.3" rx="1.8" ry="1.4" fill="#4c3922" opacity="0.64"/>
<ellipse cx="93.0" cy="151.0" rx="2.1" ry="1.5" fill="#c2a879" opacity="0.60"/>
<ellipse cx="274.4" cy="210.2" rx="3.3" ry="1.3" fill="#534028" opacity="0.51"/>
<ellipse cx="95.3" cy="181.2" rx="3.6" ry="1.6" fill="#513e26" opacity="0.44"/>
<ellipse cx="442.8" cy="124.4" rx="3.3" ry="1.8" fill="#ad956a" opacity="0.44"/>
<ellipse cx="561.8" cy="144.3" rx="2.6" ry="1.6" fill="#bba174" opacity="0.38"/>
<ellipse cx="128.9" cy="197.9" rx="1.9" ry="1.8" fill="#4a3821" opacity="0.48"/>
<ellipse cx="364.3" cy="134.2" rx="2.3" ry="1.2" fill="#402e19" opacity="0.60"/>
<ellipse cx="205.6" cy="146.4" rx="4.6" ry="2.3" fill="#c1a779" opacity="0.40"/>
<ellipse cx="494.8" cy="176.3" rx="3.8" ry="2.0" fill="#43311c" opacity="0.44"/>
<ellipse cx="616.4" cy="140.5" rx="1.9" ry="2.4" fill="#af976b" opacity="0.61"/>
<ellipse cx="226.3" cy="173.4" rx="3.5" ry="2.1" fill="#503d25" opacity="0.44"/>
<ellipse cx="316.6" cy="178.7" rx="4.4" ry="2.2" fill="#372612" opacity="0.45"/>
<ellipse cx="31.3" cy="198.2" rx="2.4" ry="1.2" fill="#ab9368" opacity="0.63"/>
<ellipse cx="153.0" cy="205.2" rx="3.9" ry="1.6" fill="#ac9469" opacity="0.61"/>
<ellipse cx="603.3" cy="132.3" rx="3.0" ry="2.4" fill="#534028" opacity="0.59"/>
<ellipse cx="537.7" cy="195.4" rx="1.7" ry="2.0" fill="#b79e71" opacity="0.50"/>
<ellipse cx="372.6" cy="206.7" rx="1.7" ry="2.1" fill="#4d3b23" opacity="0.63"/>
<ellipse cx="190.2" cy="162.8" rx="3.4" ry="1.4" fill="#bda376" opacity="0.37"/>
<ellipse cx="260.5" cy="147.3" rx="2.0" ry="2.1" fill="#402e19" opacity="0.58"/>
<ellipse cx="375.2" cy="151.2" rx="2.5" ry="2.3" fill="#b49b6f" opacity="0.40"/>
<ellipse cx="410.1" cy="138.4" rx="4.2" ry="1.3" fill="#baa174" opacity="0.58"/>
<ellipse cx="435.8" cy="153.0" rx="1.9" ry="1.4" fill="#c2a87a" opacity="0.48"/>
<ellipse cx="510.8" cy="151.5" rx="3.1" ry="1.5" fill="#402f1a" opacity="0.41"/>
<ellipse cx="722.3" cy="186.3" rx="4.9" ry="1.8" fill="#4c3922" opacity="0.39"/>
<ellipse cx="355.9" cy="149.9" rx="1.5" ry="2.4" fill="#47351e" opacity="0.58"/>
<ellipse cx="457.0" cy="207.6" rx="2.4" ry="1.2" fill="#b1996d" opacity="0.36"/>
<ellipse cx="563.8" cy="196.6" rx="3.7" ry="2.3" fill="#3c2b16" opacity="0.67"/>
<ellipse cx="122.6" cy="190.2" rx="2.6" ry="1.3" fill="#c0a678" opacity="0.64"/>
<ellipse cx="233.1" cy="142.4" rx="4.4" ry="1.4" fill="#42301b" opacity="0.36"/>
<ellipse cx="412.7" cy="172.2" rx="4.7" ry="2.4" fill="#bfa577" opacity="0.52"/>
<ellipse cx="363.7" cy="118.1" rx="1.8" ry="2.0" fill="#48361f" opacity="0.41"/>
<ellipse cx="322.6" cy="211.5" rx="3.0" ry="1.3" fill="#382713" opacity="0.60"/>
<ellipse cx="2.0" cy="196.7" rx="3.0" ry="1.4" fill="#c1a779" opacity="0.58"/>
<ellipse cx="374.6" cy="148.4" rx="3.8" ry="2.2" fill="#44321c" opacity="0.67"/>
<ellipse cx="322.6" cy="164.8" rx="1.8" ry="1.5" fill="#3c2b17" opacity="0.51"/>
<ellipse cx="707.1" cy="204.5" rx="4.9" ry="1.9" fill="#c7ac7d" opacity="0.63"/>
<ellipse cx="43.7" cy="177.8" rx="3.5" ry="2.4" fill="#b29a6e" opacity="0.52"/>
<ellipse cx="471.3" cy="134.4" rx="1.6" ry="1.3" fill="#513e26" opacity="0.59"/>
<ellipse cx="325.7" cy="109.8" rx="3.5" ry="1.6" fill="#b59c70" opacity="0.54"/>
<ellipse cx="411.2" cy="145.6" rx="4.6" ry="1.8" fill="#3c2b16" opacity="0.39"/>
<ellipse cx="627.7" cy="129.2" rx="2.4" ry="1.7" fill="#46341e" opacity="0.54"/>
<ellipse cx="164.9" cy="165.9" rx="3.6" ry="1.1" fill="#46341e" opacity="0.49"/>
<ellipse cx="53.5" cy="150.5" rx="4.0" ry="2.1" fill="#baa174" opacity="0.39"/>
<ellipse cx="721.2" cy="183.0" rx="2.9" ry="1.3" fill="#4f3c25" opacity="0.69"/>
<ellipse cx="409.9" cy="189.1" rx="1.7" ry="1.4" fill="#4e3b24" opacity="0.48"/>
<ellipse cx="11.0" cy="168.3" rx="4.0" ry="1.6" fill="#3f2e19" opacity="0.66"/>
<ellipse cx="452.2" cy="200.3" rx="4.5" ry="1.3" fill="#523f27" opacity="0.61"/>
<ellipse cx="248.5" cy="187.8" rx="1.9" ry="1.6" fill="#c2a87a" opacity="0.61"/>
<ellipse cx="690.2" cy="183.0" rx="1.8" ry="1.8" fill="#493620" opacity="0.63"/>
<ellipse cx="82.2" cy="206.4" rx="2.2" ry="1.7" fill="#b1996d" opacity="0.64"/>
<ellipse cx="423.2" cy="113.1" rx="4.3" ry="1.3" fill="#3a2915" opacity="0.54"/>
<ellipse cx="211.1" cy="179.0" rx="4.6" ry="1.8" fill="#3b2a15" opacity="0.59"/>
<ellipse cx="588.4" cy="209.1" rx="2.0" ry="1.8" fill="#412f1a" opacity="0.66"/>
<ellipse cx="132.7" cy="194.1" rx="3.2" ry="1.2" fill="#b59d70" opacity="0.65"/>
<ellipse cx="286.4" cy="200.4" rx="2.7" ry="1.3" fill="#ac9469" opacity="0.66"/>
<ellipse cx="429.0" cy="105.0" rx="3.1" ry="1.9" fill="#41301a" opacity="0.49"/>
<ellipse cx="421.6" cy="138.4" rx="5.0" ry="1.1" fill="#44321d" opacity="0.40"/>
<ellipse cx="488.5" cy="131.4" rx="2.4" ry="1.9" fill="#46341e" opacity="0.53"/>
<ellipse cx="696.7" cy="214.1" rx="4.2" ry="2.3" fill="#47351f" opacity="0.62"/>
<ellipse cx="460.9" cy="173.0" rx="4.3" ry="2.3" fill="#3f2e19" opacity="0.68"/>
<ellipse cx="496.0" cy="135.0" rx="3.3" ry="2.0" fill="#c0a678" opacity="0.47"/>
<ellipse cx="400.9" cy="146.7" rx="2.6" ry="2.5" fill="#412f1a" opacity="0.52"/>
<ellipse cx="267.4" cy="128.0" rx="2.0" ry="1.0" fill="#412f1a" opacity="0.65"/>
<ellipse cx="329.9" cy="151.2" rx="2.1" ry="1.1" fill="#402e19" opacity="0.46"/>
<ellipse cx="224.6" cy="183.6" rx="2.7" ry="2.4" fill="#533f27" opacity="0.55"/>
<ellipse cx="422.6" cy="213.6" rx="3.0" ry="2.3" fill="#4e3b24" opacity="0.37"/>
<ellipse cx="352.7" cy="203.4" rx="1.6" ry="1.2" fill="#3e2d18" opacity="0.44"/>
<ellipse cx="290.9" cy="123.0" rx="3.8" ry="1.3" fill="#c3a97b" opacity="0.61"/>
<ellipse cx="701.2" cy="169.1" rx="4.6" ry="1.5" fill="#4f3c24" opacity="0.40"/>
<ellipse cx="137.0" cy="161.7" rx="4.7" ry="1.3" fill="#bda376" opacity="0.46"/>
<ellipse cx="545.5" cy="174.6" rx="2.7" ry="1.1" fill="#4b3822" opacity="0.49"/>
<ellipse cx="33.1" cy="172.0" rx="3.6" ry="1.4" fill="#45331d" opacity="0.51"/>
<ellipse cx="9.9" cy="206.4" rx="1.7" ry="1.9" fill="#544128" opacity="0.60"/>
<ellipse cx="592.6" cy="148.7" rx="3.4" ry="2.0" fill="#48361f" opacity="0.56"/>
<ellipse cx="240.9" cy="185.2" rx="4.2" ry="2.2" fill="#4c3922" opacity="0.46"/>
<ellipse cx="562.5" cy="212.4" rx="3.3" ry="2.4" fill="#3f2e19" opacity="0.40"/>
<ellipse cx="6.6" cy="154.7" rx="2.8" ry="2.5" fill="#c1a779" opacity="0.43"/>
<ellipse cx="43.8" cy="157.7" rx="4.8" ry="1.5" fill="#3c2b16" opacity="0.40"/>
<ellipse cx="129.2" cy="184.8" rx="1.6" ry="2.2" fill="#ae966b" opacity="0.43"/>
<ellipse cx="715.1" cy="157.4" rx="4.3" ry="1.7" fill="#b49b6f" opacity="0.46"/>
<ellipse cx="469.9" cy="146.2" rx="3.5" ry="1.6" fill="#ab9469" opacity="0.67"/>
<ellipse cx="687.9" cy="172.1" rx="2.4" ry="1.7" fill="#3e2d18" opacity="0.43"/>
<ellipse cx="147.9" cy="187.3" rx="5.0" ry="1.3" fill="#b29a6e" opacity="0.55"/>
<ellipse cx="114.1" cy="199.3" rx="4.1" ry="2.2" fill="#b2996d" opacity="0.45"/>
<ellipse cx="241.4" cy="155.8" rx="3.9" ry="1.9" fill="#ae966b" opacity="0.51"/>
<ellipse cx="421.7" cy="201.5" rx="2.8" ry="2.2" fill="#513e26" opacity="0.65"/>
<ellipse cx="132.7" cy="199.4" rx="1.6" ry="1.2" fill="#b29a6e" opacity="0.69"/>
<ellipse cx="6.9" cy="204.8" rx="1.8" ry="1.3" fill="#4d3a23" opacity="0.59"/>
<ellipse cx="668.7" cy="182.4" rx="1.6" ry="1.4" fill="#c7ac7d" opacity="0.63"/>
<ellipse cx="367.5" cy="126.6" rx="1.6" ry="2.5" fill="#3a2915" opacity="0.46"/>
<ellipse cx="354.8" cy="115.6" rx="3.9" ry="1.2" fill="#3c2b16" opacity="0.61"/>
<ellipse cx="364.5" cy="112.9" rx="4.7" ry="1.5" fill="#45331d" opacity="0.43"/>
<ellipse cx="704.3" cy="201.6" rx="2.1" ry="1.4" fill="#b2996d" opacity="0.37"/>
<ellipse cx="31.4" cy="158.5" rx="2.8" ry="1.0" fill="#47351f" opacity="0.59"/>
<ellipse cx="475.5" cy="162.6" rx="4.9" ry="2.3" fill="#4b3922" opacity="0.60"/>
<ellipse cx="290.7" cy="136.6" rx="2.9" ry="1.6" fill="#544028" opacity="0.49"/>
<ellipse cx="104.1" cy="214.8" rx="4.7" ry="1.4" fill="#493620" opacity="0.56"/>
<ellipse cx="274.4" cy="127.7" rx="4.5" ry="2.2" fill="#3a2915" opacity="0.67"/>
<ellipse cx="36.0" cy="179.8" rx="3.4" ry="1.5" fill="#4a3721" opacity="0.69"/>
<ellipse cx="0.7" cy="185.8" rx="3.6" ry="2.5" fill="#b9a073" opacity="0.43"/>
<ellipse cx="458.3" cy="185.5" rx="2.9" ry="1.8" fill="#4c3922" opacity="0.56"/>
<ellipse cx="493.0" cy="137.0" rx="2.3" ry="1.9" fill="#baa173" opacity="0.44"/>
<ellipse cx="661.6" cy="154.4" rx="3.2" ry="1.3" fill="#b9a073" opacity="0.40"/>
<ellipse cx="675.1" cy="160.8" rx="4.3" ry="1.4" fill="#46341e" opacity="0.41"/>
<ellipse cx="598.3" cy="152.9" rx="4.6" ry="2.3" fill="#c2a87a" opacity="0.37"/>
<ellipse cx="277.6" cy="195.7" rx="2.0" ry="1.4" fill="#ad956a" opacity="0.39"/>
<ellipse cx="259.6" cy="192.4" rx="1.8" ry="1.6" fill="#44321c" opacity="0.70"/>
<ellipse cx="506.0" cy="151.7" rx="4.2" ry="1.2" fill="#4e3c24" opacity="0.59"/>
<ellipse cx="267.1" cy="159.9" rx="2.7" ry="1.6" fill="#42301b" opacity="0.36"/>
<ellipse cx="146.2" cy="165.6" rx="4.0" ry="1.4" fill="#3c2b16" opacity="0.46"/>
<ellipse cx="176.1" cy="195.9" rx="4.5" ry="1.3" fill="#4a3721" opacity="0.50"/>
<ellipse cx="576.8" cy="171.1" rx="3.0" ry="1.6" fill="#382713" opacity="0.60"/>
<ellipse cx="214.9" cy="146.9" rx="2.7" ry="1.6" fill="#c2a879" opacity="0.55"/>
<ellipse cx="707.2" cy="181.9" rx="2.7" ry="1.1" fill="#4a3821" opacity="0.61"/>
<ellipse cx="276.2" cy="160.5" rx="4.1" ry="1.0" fill="#523e27" opacity="0.56"/>
<ellipse cx="336.7" cy="153.2" rx="3.2" ry="2.3" fill="#b69d71" opacity="0.50"/>
<ellipse cx="357.6" cy="158.9" rx="4.1" ry="1.6" fill="#bea476" opacity="0.36"/>
<ellipse cx="494.9" cy="163.7" rx="1.9" ry="1.3" fill="#c1a779" opacity="0.38"/>
<ellipse cx="64.2" cy="186.6" rx="3.9" ry="2.1" fill="#382713" opacity="0.52"/>
<ellipse cx="39.9" cy="179.5" rx="5.0" ry="2.2" fill="#48361f" opacity="0.66"/>
<ellipse cx="377.3" cy="100.7" rx="2.4" ry="1.5" fill="#b2996d" opacity="0.44"/>
<ellipse cx="625.3" cy="163.9" rx="1.7" ry="1.5" fill="#43311c" opacity="0.65"/>
<ellipse cx="583.8" cy="198.5" rx="1.7" ry="1.8" fill="#3d2b17" opacity="0.48"/>
<ellipse cx="338.0" cy="156.2" rx="4.3" ry="1.3" fill="#41301a" opacity="0.67"/>
<ellipse cx="404.9" cy="105.9" rx="2.9" ry="1.8" fill="#46341e" opacity="0.46"/>
<ellipse cx="199.1" cy="191.6" rx="4.3" ry="1.9" fill="#4c3922" opacity="0.51"/>
<ellipse cx="680.6" cy="151.2" rx="3.0" ry="2.0" fill="#ab9469" opacity="0.37"/>
<ellipse cx="434.1" cy="120.7" rx="4.3" ry="1.7" fill="#baa174" opacity="0.59"/>
<ellipse cx="491.4" cy="133.9" rx="2.0" ry="2.4" fill="#503d25" opacity="0.42"/>
<ellipse cx="570.9" cy="209.4" rx="2.4" ry="2.4" fill="#4a3821" opacity="0.59"/>
<ellipse cx="608.7" cy="133.8" rx="2.6" ry="1.8" fill="#48361f" opacity="0.40"/>
<ellipse cx="663.9" cy="137.3" rx="4.3" ry="2.5" fill="#ae966b" opacity="0.49"/>
<ellipse cx="24.0" cy="143.7" rx="3.4" ry="1.1" fill="#b0986c" opacity="0.51"/>
<ellipse cx="530.2" cy="149.4" rx="4.4" ry="1.2" fill="#ad956a" opacity="0.67"/>
<ellipse cx="725.2" cy="208.0" rx="2.7" ry="2.1" fill="#3f2e19" opacity="0.52"/>
<ellipse cx="352.9" cy="199.4" rx="1.8" ry="1.2" fill="#47351e" opacity="0.44"/>
<ellipse cx="650.2" cy="197.2" rx="1.6" ry="1.9" fill="#523f27" opacity="0.69"/>
<ellipse cx="250.6" cy="208.6" rx="2.7" ry="1.7" fill="#ab9368" opacity="0.44"/>
<ellipse cx="573.5" cy="134.3" rx="1.8" ry="1.8" fill="#47351f" opacity="0.63"/>
<ellipse cx="433.6" cy="153.1" rx="1.8" ry="2.0" fill="#46341e" opacity="0.40"/>
<ellipse cx="420.8" cy="140.6" rx="2.1" ry="1.3" fill="#4a3821" opacity="0.68"/>
<ellipse cx="241.4" cy="196.9" rx="2.0" ry="1.1" fill="#b89f72" opacity="0.66"/>
<ellipse cx="85.2" cy="157.1" rx="3.1" ry="1.2" fill="#3a2915" opacity="0.54"/>
<ellipse cx="368.9" cy="142.2" rx="2.2" ry="1.2" fill="#43311b" opacity="0.43"/>
<ellipse cx="634.5" cy="157.7" rx="4.8" ry="1.7" fill="#aa9268" opacity="0.63"/>
<ellipse cx="415.3" cy="179.2" rx="2.0" ry="1.4" fill="#4d3a23" opacity="0.36"/>
<ellipse cx="286.3" cy="159.6" rx="1.8" ry="1.9" fill="#513e26" opacity="0.43"/>
<ellipse cx="433.4" cy="190.2" rx="2.4" ry="1.9" fill="#ab9469" opacity="0.69"/>
</g>
<g filter="url(#sf)">
<clipPath id="stc"><path d="M63 206 L645 214 L728 216 L728 306 L0 306 L0 284 L122 284 Z"/></clipPath>
<g clip-path="url(#stc)">
<rect x="0" y="200" width="728" height="106" fill="#4a3826"/>
<rect x="-1.6" y="206.6" width="65.1" height="4.6" fill="#786243"/>
<rect x="65.4" y="206.6" width="76.9" height="4.6" fill="#6c5639"/>
<rect x="144.3" y="206.6" width="76.6" height="4.6" fill="#705a3c"/>
<rect x="223.0" y="206.6" width="83.3" height="4.6" fill="#604c30"/>
<rect x="308.2" y="206.6" width="84.4" height="4.6" fill="#6e593b"/>
<rect x="394.6" y="206.6" width="52.4" height="4.6" fill="#634e32"/>
<rect x="449.1" y="206.6" width="42.7" height="4.6" fill="#7a6344"/>
<rect x="493.7" y="206.6" width="68.7" height="4.6" fill="#655034"/>
<rect x="564.5" y="206.6" width="48.7" height="4.6" fill="#655034"/>
<rect x="615.1" y="206.6" width="39.9" height="4.6" fill="#675236"/>
<rect x="657.0" y="206.6" width="47.9" height="4.6" fill="#836b4a"/>
<rect x="706.9" y="206.6" width="87.8" height="4.6" fill="#7c6545"/>
<rect x="0" y="204.0" width="728" height="3.2" fill="#2a1c0e" opacity=".9"/>
<rect x="-19.2" y="213.8" width="57.8" height="4.6" fill="#7c6545"/>
<rect x="40.7" y="213.8" width="82.5" height="4.6" fill="#7b6444"/>
<rect x="125.1" y="213.8" width="66.2" height="4.6" fill="#675235"/>
<rect x="193.3" y="213.8" width="65.5" height="4.6" fill="#7e6747"/>
<rect x="260.8" y="213.8" width="75.2" height="4.6" fill="#634e32"/>
<rect x="338.0" y="213.8" width="71.0" height="4.6" fill="#6c5739"/>
<rect x="411.1" y="213.8" width="37.7" height="4.6" fill="#826b4a"/>
<rect x="450.8" y="213.8" width="68.4" height="4.6" fill="#7a6344"/>
<rect x="521.2" y="213.8" width="36.1" height="4.6" fill="#7d6646"/>
<rect x="559.3" y="213.8" width="84.2" height="4.6" fill="#806948"/>
<rect x="645.5" y="213.8" width="72.7" height="4.6" fill="#7d6646"/>
<rect x="720.2" y="213.8" width="76.1" height="4.6" fill="#755e40"/>
<rect x="0" y="211.2" width="728" height="3.2" fill="#2a1c0e" opacity=".9"/>
<rect x="-17.4" y="221.0" width="77.5" height="4.6" fill="#7c6545"/>
<rect x="62.1" y="221.0" width="80.2" height="4.6" fill="#6a5538"/>
<rect x="144.3" y="221.0" width="85.7" height="4.6" fill="#735d3e"/>
<rect x="232.0" y="221.0" width="84.8" height="4.6" fill="#644f33"/>
<rect x="318.8" y="221.0" width="86.1" height="4.6" fill="#7c6545"/>
<rect x="406.9" y="221.0" width="43.1" height="4.6" fill="#7e6647"/>
<rect x="452.0" y="221.0" width="41.9" height="4.6" fill="#675235"/>
<rect x="495.9" y="221.0" width="55.5" height="4.6" fill="#685336"/>
<rect x="553.4" y="221.0" width="57.6" height="4.6" fill="#806949"/>
<rect x="612.9" y="221.0" width="69.1" height="4.6" fill="#796243"/>
<rect x="684.1" y="221.0" width="51.5" height="4.6" fill="#7c6545"/>
<rect x="0" y="218.4" width="728" height="3.2" fill="#2a1c0e" opacity=".9"/>
<rect x="-31.7" y="228.2" width="69.0" height="4.6" fill="#816a49"/>
<rect x="39.2" y="228.2" width="77.5" height="4.6" fill="#6e583b"/>
<rect x="118.8" y="228.2" width="33.2" height="4.6" fill="#776042"/>
<rect x="154.0" y="228.2" width="78.2" height="4.6" fill="#6c5639"/>
<rect x="234.2" y="228.2" width="63.7" height="4.6" fill="#7e6647"/>
<rect x="299.9" y="228.2" width="75.6" height="4.6" fill="#604b30"/>
<rect x="377.4" y="228.2" width="57.3" height="4.6" fill="#604c30"/>
<rect x="436.8" y="228.2" width="34.6" height="4.6" fill="#7d6646"/>
<rect x="473.4" y="228.2" width="53.1" height="4.6" fill="#755f40"/>
<rect x="528.5" y="228.2" width="55.4" height="4.6" fill="#6c5639"/>
<rect x="586.0" y="228.2" width="40.8" height="4.6" fill="#6c573a"/>
<rect x="628.8" y="228.2" width="78.7" height="4.6" fill="#765f41"/>
<rect x="709.5" y="228.2" width="45.5" height="4.6" fill="#634e32"/>
<rect x="0" y="225.6" width="728" height="3.2" fill="#2a1c0e" opacity=".9"/>
<rect x="-10.8" y="235.4" width="70.1" height="4.6" fill="#6f5a3c"/>
<rect x="61.2" y="235.4" width="67.7" height="4.6" fill="#7d6546"/>
<rect x="130.9" y="235.4" width="35.2" height="4.6" fill="#786142"/>
<rect x="168.1" y="235.4" width="30.5" height="4.6" fill="#7d6646"/>
<rect x="200.6" y="235.4" width="39.0" height="4.6" fill="#695437"/>
<rect x="241.7" y="235.4" width="85.5" height="4.6" fill="#6d573a"/>
<rect x="329.1" y="235.4" width="41.5" height="4.6" fill="#806848"/>
<rect x="372.6" y="235.4" width="64.6" height="4.6" fill="#806848"/>
<rect x="439.2" y="235.4" width="51.7" height="4.6" fill="#715b3d"/>
<rect x="492.9" y="235.4" width="85.3" height="4.6" fill="#725c3e"/>
<rect x="580.2" y="235.4" width="87.3" height="4.6" fill="#665135"/>
<rect x="669.5" y="235.4" width="77.8" height="4.6" fill="#655134"/>
<rect x="0" y="232.8" width="728" height="3.2" fill="#2a1c0e" opacity=".9"/>
<rect x="-21.1" y="242.6" width="28.0" height="4.6" fill="#665135"/>
<rect x="8.9" y="242.6" width="84.7" height="4.6" fill="#705a3c"/>
<rect x="95.6" y="242.6" width="76.6" height="4.6" fill="#695337"/>
<rect x="174.2" y="242.6" width="49.1" height="4.6" fill="#634f33"/>
<rect x="225.3" y="242.6" width="61.2" height="4.6" fill="#7f6747"/>
<rect x="288.5" y="242.6" width="58.8" height="4.6" fill="#6d583a"/>
<rect x="349.3" y="242.6" width="83.7" height="4.6" fill="#806848"/>
<rect x="435.0" y="242.6" width="68.0" height="4.6" fill="#624e32"/>
<rect x="505.0" y="242.6" width="65.4" height="4.6" fill="#6f5a3c"/>
<rect x="572.5" y="242.6" width="85.5" height="4.6" fill="#6d573a"/>
<rect x="659.9" y="242.6" width="67.7" height="4.6" fill="#766041"/>
<rect x="0" y="240.0" width="728" height="3.2" fill="#2a1c0e" opacity=".9"/>
<rect x="-15.0" y="249.8" width="59.3" height="4.6" fill="#786142"/>
<rect x="46.3" y="249.8" width="82.4" height="4.6" fill="#715b3d"/>
<rect x="130.7" y="249.8" width="49.8" height="4.6" fill="#836b4a"/>
<rect x="182.6" y="249.8" width="31.4" height="4.6" fill="#7e6647"/>
<rect x="216.0" y="249.8" width="69.0" height="4.6" fill="#745d3f"/>
<rect x="287.0" y="249.8" width="54.9" height="4.6" fill="#7b6444"/>
<rect x="343.8" y="249.8" width="81.5" height="4.6" fill="#7a6344"/>
<rect x="427.3" y="249.8" width="73.0" height="4.6" fill="#614c31"/>
<rect x="502.3" y="249.8" width="47.5" height="4.6" fill="#645034"/>
<rect x="551.8" y="249.8" width="85.2" height="4.6" fill="#806848"/>
<rect x="639.0" y="249.8" width="36.7" height="4.6" fill="#755e40"/>
<rect x="677.7" y="249.8" width="62.6" height="4.6" fill="#614d31"/>
<rect x="0" y="247.2" width="728" height="3.2" fill="#2a1c0e" opacity=".9"/>
<rect x="-15.7" y="257.0" width="72.8" height="4.6" fill="#776041"/>
<rect x="59.2" y="257.0" width="44.9" height="4.6" fill="#7b6445"/>
<rect x="106.0" y="257.0" width="45.5" height="4.6" fill="#735d3f"/>
<rect x="153.5" y="257.0" width="53.2" height="4.6" fill="#836b4a"/>
<rect x="208.7" y="257.0" width="66.9" height="4.6" fill="#7c6546"/>
<rect x="277.6" y="257.0" width="68.6" height="4.6" fill="#6d583a"/>
<rect x="348.2" y="257.0" width="85.8" height="4.6" fill="#796243"/>
<rect x="436.0" y="257.0" width="69.5" height="4.6" fill="#695437"/>
<rect x="507.5" y="257.0" width="37.7" height="4.6" fill="#745e40"/>
<rect x="547.2" y="257.0" width="77.6" height="4.6" fill="#7c6545"/>
<rect x="626.7" y="257.0" width="48.8" height="4.6" fill="#655034"/>
<rect x="677.6" y="257.0" width="59.0" height="4.6" fill="#7f6848"/>
<rect x="0" y="254.4" width="728" height="3.2" fill="#2a1c0e" opacity=".9"/>
<rect x="-6.5" y="264.2" width="72.3" height="4.6" fill="#665135"/>
<rect x="67.8" y="264.2" width="46.7" height="4.6" fill="#614d31"/>
<rect x="116.5" y="264.2" width="45.9" height="4.6" fill="#6d583a"/>
<rect x="164.4" y="264.2" width="86.0" height="4.6" fill="#826a4a"/>
<rect x="252.4" y="264.2" width="39.2" height="4.6" fill="#6b5538"/>
<rect x="293.6" y="264.2" width="84.6" height="4.6" fill="#675235"/>
<rect x="380.3" y="264.2" width="47.3" height="4.6" fill="#6f5a3c"/>
<rect x="429.5" y="264.2" width="34.5" height="4.6" fill="#695437"/>
<rect x="466.0" y="264.2" width="51.6" height="4.6" fill="#6d583a"/>
<rect x="519.7" y="264.2" width="85.8" height="4.6" fill="#695437"/>
<rect x="607.5" y="264.2" width="40.2" height="4.6" fill="#806949"/>
<rect x="649.7" y="264.2" width="55.0" height="4.6" fill="#7e6647"/>
<rect x="706.7" y="264.2" width="66.2" height="4.6" fill="#7c6545"/>
<rect x="0" y="261.6" width="728" height="3.2" fill="#2a1c0e" opacity=".9"/>
<rect x="-12.6" y="271.4" width="37.1" height="4.6" fill="#7b6444"/>
<rect x="26.5" y="271.4" width="56.2" height="4.6" fill="#745d3f"/>
<rect x="84.7" y="271.4" width="68.2" height="4.6" fill="#7b6444"/>
<rect x="155.0" y="271.4" width="44.5" height="4.6" fill="#6d573a"/>
<rect x="201.5" y="271.4" width="83.0" height="4.6" fill="#735c3e"/>
<rect x="286.6" y="271.4" width="45.3" height="4.6" fill="#766041"/>
<rect x="333.9" y="271.4" width="43.6" height="4.6" fill="#7b6445"/>
<rect x="379.4" y="271.4" width="30.5" height="4.6" fill="#7d6646"/>
<rect x="411.9" y="271.4" width="62.0" height="4.6" fill="#6c573a"/>
<rect x="475.9" y="271.4" width="84.4" height="4.6" fill="#695437"/>
<rect x="562.3" y="271.4" width="42.6" height="4.6" fill="#624e32"/>
<rect x="606.9" y="271.4" width="60.9" height="4.6" fill="#7b6444"/>
<rect x="669.8" y="271.4" width="68.7" height="4.6" fill="#6e593b"/>
<rect x="0" y="268.8" width="728" height="3.2" fill="#2a1c0e" opacity=".9"/>
<rect x="-32.3" y="278.6" width="34.7" height="4.6" fill="#6b5538"/>
<rect x="4.4" y="278.6" width="66.7" height="4.6" fill="#826b4a"/>
<rect x="73.1" y="278.6" width="66.0" height="4.6" fill="#786243"/>
<rect x="141.1" y="278.6" width="74.5" height="4.6" fill="#6e583b"/>
<rect x="217.6" y="278.6" width="84.4" height="4.6" fill="#7a6344"/>
<rect x="304.0" y="278.6" width="48.5" height="4.6" fill="#6e583b"/>
<rect x="354.5" y="278.6" width="76.3" height="4.6" fill="#6c5739"/>
<rect x="432.8" y="278.6" width="39.1" height="4.6" fill="#7f6848"/>
<rect x="474.0" y="278.6" width="59.9" height="4.6" fill="#725c3e"/>
<rect x="535.9" y="278.6" width="68.2" height="4.6" fill="#806948"/>
<rect x="606.0" y="278.6" width="36.0" height="4.6" fill="#6c5639"/>
<rect x="644.1" y="278.6" width="32.0" height="4.6" fill="#6e593b"/>
<rect x="678.0" y="278.6" width="58.1" height="4.6" fill="#7e6747"/>
<rect x="0" y="276.0" width="728" height="3.2" fill="#2a1c0e" opacity=".9"/>
<rect x="-26.7" y="285.8" width="62.7" height="4.6" fill="#6e583b"/>
<rect x="38.0" y="285.8" width="62.4" height="4.6" fill="#695437"/>
<rect x="102.4" y="285.8" width="78.7" height="4.6" fill="#7c6545"/>
<rect x="183.1" y="285.8" width="78.3" height="4.6" fill="#655034"/>
<rect x="263.4" y="285.8" width="68.3" height="4.6" fill="#7b6444"/>
<rect x="333.7" y="285.8" width="58.0" height="4.6" fill="#806848"/>
<rect x="393.7" y="285.8" width="81.9" height="4.6" fill="#7a6344"/>
<rect x="477.6" y="285.8" width="77.3" height="4.6" fill="#776042"/>
<rect x="556.9" y="285.8" width="80.7" height="4.6" fill="#645034"/>
<rect x="639.6" y="285.8" width="70.2" height="4.6" fill="#796243"/>
<rect x="711.9" y="285.8" width="64.7" height="4.6" fill="#695437"/>
<rect x="0" y="283.2" width="728" height="3.2" fill="#2a1c0e" opacity=".9"/>
<rect x="-2.7" y="293.0" width="64.2" height="4.6" fill="#7d6646"/>
<rect x="63.5" y="293.0" width="44.4" height="4.6" fill="#675236"/>
<rect x="109.9" y="293.0" width="41.4" height="4.6" fill="#634e33"/>
<rect x="153.3" y="293.0" width="68.6" height="4.6" fill="#836b4a"/>
<rect x="223.9" y="293.0" width="76.1" height="4.6" fill="#6c573a"/>
<rect x="302.0" y="293.0" width="70.0" height="4.6" fill="#624e32"/>
<rect x="374.0" y="293.0" width="78.3" height="4.6" fill="#6b5639"/>
<rect x="454.3" y="293.0" width="28.2" height="4.6" fill="#766041"/>
<rect x="484.5" y="293.0" width="36.3" height="4.6" fill="#695437"/>
<rect x="522.8" y="293.0" width="31.5" height="4.6" fill="#705a3c"/>
<rect x="556.4" y="293.0" width="61.3" height="4.6" fill="#7d6546"/>
<rect x="619.7" y="293.0" width="30.4" height="4.6" fill="#7d6646"/>
<rect x="652.0" y="293.0" width="34.6" height="4.6" fill="#685336"/>
<rect x="688.7" y="293.0" width="65.8" height="4.6" fill="#6c5639"/>
<rect x="0" y="290.4" width="728" height="3.2" fill="#2a1c0e" opacity=".9"/>
<rect x="-13.2" y="300.2" width="62.1" height="4.6" fill="#675236"/>
<rect x="50.9" y="300.2" width="75.6" height="4.6" fill="#675236"/>
<rect x="128.5" y="300.2" width="78.4" height="4.6" fill="#7d6646"/>
<rect x="208.8" y="300.2" width="60.2" height="4.6" fill="#614c31"/>
<rect x="271.1" y="300.2" width="74.7" height="4.6" fill="#614c31"/>
<rect x="347.7" y="300.2" width="58.3" height="4.6" fill="#6f593b"/>
<rect x="408.0" y="300.2" width="31.8" height="4.6" fill="#766041"/>
<rect x="441.8" y="300.2" width="71.5" height="4.6" fill="#755e40"/>
<rect x="515.3" y="300.2" width="52.0" height="4.6" fill="#725c3e"/>
<rect x="569.3" y="300.2" width="63.3" height="4.6" fill="#685336"/>
<rect x="634.6" y="300.2" width="80.1" height="4.6" fill="#836c4b"/>
<rect x="716.7" y="300.2" width="76.3" height="4.6" fill="#826a4a"/>
<rect x="0" y="297.6" width="728" height="3.2" fill="#2a1c0e" opacity=".9"/>
<rect x="-13.2" y="307.4" width="87.2" height="4.6" fill="#624e32"/>
<rect x="76.0" y="307.4" width="56.7" height="4.6" fill="#645034"/>
<rect x="134.7" y="307.4" width="55.2" height="4.6" fill="#786142"/>
<rect x="191.9" y="307.4" width="70.5" height="4.6" fill="#705a3c"/>
<rect x="264.4" y="307.4" width="48.5" height="4.6" fill="#665135"/>
<rect x="314.9" y="307.4" width="52.2" height="4.6" fill="#6a5438"/>
<rect x="369.1" y="307.4" width="39.7" height="4.6" fill="#7a6344"/>
<rect x="410.7" y="307.4" width="59.0" height="4.6" fill="#6f5a3c"/>
<rect x="471.7" y="307.4" width="39.9" height="4.6" fill="#796243"/>
<rect x="513.6" y="307.4" width="39.8" height="4.6" fill="#695437"/>
<rect x="555.4" y="307.4" width="61.6" height="4.6" fill="#796243"/>
<rect x="619.0" y="307.4" width="86.4" height="4.6" fill="#7a6444"/>
<rect x="707.4" y="307.4" width="84.9" height="4.6" fill="#816949"/>
<rect x="0" y="304.8" width="728" height="3.2" fill="#2a1c0e" opacity=".9"/>
</g>
<path d="M14 197 L63 206 L122 284 L98 284 L40 222 Z" fill="#9a7c50"/>
<clipPath id="lcc"><path d="M0 194 L14 197 L40 222 L64 236 L94 265 L99 284 L0 284 Z"/></clipPath>
<g clip-path="url(#lcc)"><rect x="0" y="190" width="100" height="100" fill="#22160c"/>
<rect x="-14.5" y="197.0" width="31.5" height="5" fill="#27180c"/>
<rect x="18.5" y="197.0" width="18.6" height="5" fill="#26170b"/>
<rect x="38.7" y="197.0" width="35.1" height="5" fill="#372617"/>
<rect x="75.3" y="197.0" width="29.3" height="5" fill="#2c1c0f"/>
<rect x="-7.1" y="204.5" width="17.6" height="5" fill="#352416"/>
<rect x="12.0" y="204.5" width="38.3" height="5" fill="#2d1d10"/>
<rect x="51.8" y="204.5" width="14.6" height="5" fill="#2a1a0e"/>
<rect x="67.9" y="204.5" width="22.4" height="5" fill="#3b2a1b"/>
<rect x="91.8" y="204.5" width="33.6" height="5" fill="#302113"/>
<rect x="-2.0" y="212.0" width="16.2" height="5" fill="#291a0d"/>
<rect x="15.6" y="212.0" width="32.9" height="5" fill="#312113"/>
<rect x="50.1" y="212.0" width="38.3" height="5" fill="#3b2a1b"/>
<rect x="89.8" y="212.0" width="33.4" height="5" fill="#312113"/>
<rect x="-16.4" y="219.5" width="16.7" height="5" fill="#28190c"/>
<rect x="1.8" y="219.5" width="27.6" height="5" fill="#322214"/>
<rect x="30.9" y="219.5" width="18.7" height="5" fill="#2c1c0f"/>
<rect x="51.1" y="219.5" width="14.0" height="5" fill="#3b2a1b"/>
<rect x="66.6" y="219.5" width="31.3" height="5" fill="#3c2b1c"/>
<rect x="99.4" y="219.5" width="38.0" height="5" fill="#302012"/>
<rect x="-14.6" y="227.0" width="23.1" height="5" fill="#392819"/>
<rect x="10.0" y="227.0" width="34.5" height="5" fill="#291a0d"/>
<rect x="46.0" y="227.0" width="13.8" height="5" fill="#2b1b0e"/>
<rect x="61.3" y="227.0" width="28.1" height="5" fill="#2f1f11"/>
<rect x="90.9" y="227.0" width="13.7" height="5" fill="#392919"/>
<rect x="-15.7" y="234.5" width="25.1" height="5" fill="#27180b"/>
<rect x="10.9" y="234.5" width="35.7" height="5" fill="#322214"/>
<rect x="48.1" y="234.5" width="15.3" height="5" fill="#2d1e10"/>
<rect x="64.9" y="234.5" width="29.1" height="5" fill="#3b2a1a"/>
<rect x="95.5" y="234.5" width="25.6" height="5" fill="#352516"/>
<rect x="-4.1" y="242.0" width="19.6" height="5" fill="#3b2a1b"/>
<rect x="17.0" y="242.0" width="23.1" height="5" fill="#28190c"/>
<rect x="41.5" y="242.0" width="28.3" height="5" fill="#29190d"/>
<rect x="71.3" y="242.0" width="18.5" height="5" fill="#302113"/>
<rect x="91.3" y="242.0" width="28.1" height="5" fill="#352416"/>
<rect x="-14.1" y="249.5" width="24.5" height="5" fill="#27180c"/>
<rect x="11.9" y="249.5" width="31.6" height="5" fill="#27180b"/>
<rect x="45.0" y="249.5" width="25.3" height="5" fill="#2f1f12"/>
<rect x="71.7" y="249.5" width="30.3" height="5" fill="#372617"/>
<rect x="-4.8" y="257.0" width="29.7" height="5" fill="#362617"/>
<rect x="26.4" y="257.0" width="25.3" height="5" fill="#291a0d"/>
<rect x="53.2" y="257.0" width="36.2" height="5" fill="#342415"/>
<rect x="91.0" y="257.0" width="15.1" height="5" fill="#2b1c0f"/>
<rect x="-19.7" y="264.5" width="19.2" height="5" fill="#2f1f12"/>
<rect x="1.0" y="264.5" width="33.2" height="5" fill="#392819"/>
<rect x="35.7" y="264.5" width="29.3" height="5" fill="#372718"/>
<rect x="66.5" y="264.5" width="14.5" height="5" fill="#28190c"/>
<rect x="82.5" y="264.5" width="37.9" height="5" fill="#392819"/>
<rect x="-0.8" y="272.0" width="14.7" height="5" fill="#2b1c0f"/>
<rect x="15.5" y="272.0" width="36.8" height="5" fill="#2b1b0e"/>
<rect x="53.7" y="272.0" width="30.3" height="5" fill="#3c2b1b"/>
<rect x="85.5" y="272.0" width="29.5" height="5" fill="#3c2b1b"/>
<rect x="-5.3" y="279.5" width="17.3" height="5" fill="#26170b"/>
<rect x="13.6" y="279.5" width="32.4" height="5" fill="#28190c"/>
<rect x="47.5" y="279.5" width="37.8" height="5" fill="#372617"/>
<rect x="86.8" y="279.5" width="18.2" height="5" fill="#392819"/>
<rect x="-3.3" y="287.0" width="26.3" height="5" fill="#28190c"/>
<rect x="24.5" y="287.0" width="33.2" height="5" fill="#3b2a1b"/>
<rect x="59.2" y="287.0" width="36.4" height="5" fill="#26170b"/>
<rect x="97.1" y="287.0" width="34.8" height="5" fill="#332315"/>
</g>
<clipPath id="rcc"><path d="M618 306 L645 267 L680 244 L710 220 L728 215 L728 306 Z"/></clipPath>
<g clip-path="url(#rcc)"><rect x="610" y="210" width="120" height="100" fill="#2c1e12"/>
<rect x="593.6" y="216.0" width="26.1" height="5.5" fill="#473522"/>
<rect x="621.1" y="216.0" width="28.4" height="5.5" fill="#4c3926"/>
<rect x="651.0" y="216.0" width="15.4" height="5.5" fill="#372616"/>
<rect x="667.9" y="216.0" width="27.1" height="5.5" fill="#3e2c1b"/>
<rect x="696.6" y="216.0" width="23.4" height="5.5" fill="#362515"/>
<rect x="721.5" y="216.0" width="32.1" height="5.5" fill="#362616"/>
<rect x="593.4" y="224.0" width="33.8" height="5.5" fill="#42301f"/>
<rect x="628.7" y="224.0" width="16.6" height="5.5" fill="#483523"/>
<rect x="646.7" y="224.0" width="18.7" height="5.5" fill="#42301e"/>
<rect x="666.9" y="224.0" width="16.3" height="5.5" fill="#513e2a"/>
<rect x="684.7" y="224.0" width="27.2" height="5.5" fill="#3f2e1c"/>
<rect x="713.3" y="224.0" width="15.9" height="5.5" fill="#4a3724"/>
<rect x="593.0" y="232.0" width="34.7" height="5.5" fill="#382717"/>
<rect x="629.2" y="232.0" width="22.7" height="5.5" fill="#3e2d1b"/>
<rect x="653.4" y="232.0" width="32.6" height="5.5" fill="#3a2918"/>
<rect x="687.5" y="232.0" width="28.7" height="5.5" fill="#513e2a"/>
<rect x="717.6" y="232.0" width="32.7" height="5.5" fill="#362515"/>
<rect x="608.5" y="240.0" width="16.3" height="5.5" fill="#493624"/>
<rect x="626.3" y="240.0" width="28.5" height="5.5" fill="#443220"/>
<rect x="656.3" y="240.0" width="24.9" height="5.5" fill="#412f1e"/>
<rect x="682.7" y="240.0" width="28.8" height="5.5" fill="#483523"/>
<rect x="713.0" y="240.0" width="36.4" height="5.5" fill="#4a3724"/>
<rect x="594.1" y="248.0" width="36.3" height="5.5" fill="#4d3a27"/>
<rect x="631.9" y="248.0" width="31.4" height="5.5" fill="#362616"/>
<rect x="664.8" y="248.0" width="30.5" height="5.5" fill="#4d3a27"/>
<rect x="696.8" y="248.0" width="24.3" height="5.5" fill="#4e3b27"/>
<rect x="722.6" y="248.0" width="18.0" height="5.5" fill="#503d29"/>
<rect x="601.2" y="256.0" width="31.2" height="5.5" fill="#3d2b1a"/>
<rect x="633.8" y="256.0" width="21.0" height="5.5" fill="#3f2e1c"/>
<rect x="656.3" y="256.0" width="21.6" height="5.5" fill="#382717"/>
<rect x="679.5" y="256.0" width="24.6" height="5.5" fill="#513e2a"/>
<rect x="705.5" y="256.0" width="29.9" height="5.5" fill="#503c29"/>
<rect x="594.8" y="264.0" width="34.4" height="5.5" fill="#513e2a"/>
<rect x="630.7" y="264.0" width="32.3" height="5.5" fill="#3d2c1b"/>
<rect x="664.5" y="264.0" width="19.7" height="5.5" fill="#412f1e"/>
<rect x="685.7" y="264.0" width="14.0" height="5.5" fill="#3c2b1a"/>
<rect x="701.3" y="264.0" width="35.7" height="5.5" fill="#4f3c28"/>
<rect x="603.4" y="272.0" width="32.8" height="5.5" fill="#4b3825"/>
<rect x="637.7" y="272.0" width="35.7" height="5.5" fill="#4c3926"/>
<rect x="674.9" y="272.0" width="26.8" height="5.5" fill="#382817"/>
<rect x="703.2" y="272.0" width="34.1" height="5.5" fill="#3e2d1c"/>
<rect x="597.5" y="280.0" width="22.7" height="5.5" fill="#453220"/>
<rect x="621.6" y="280.0" width="37.6" height="5.5" fill="#3a2918"/>
<rect x="660.8" y="280.0" width="26.8" height="5.5" fill="#483523"/>
<rect x="689.1" y="280.0" width="27.0" height="5.5" fill="#503d29"/>
<rect x="717.5" y="280.0" width="23.7" height="5.5" fill="#4f3c28"/>
<rect x="596.2" y="288.0" width="37.7" height="5.5" fill="#382717"/>
<rect x="635.4" y="288.0" width="18.8" height="5.5" fill="#3e2c1b"/>
<rect x="655.7" y="288.0" width="36.2" height="5.5" fill="#362515"/>
<rect x="693.4" y="288.0" width="20.0" height="5.5" fill="#4a3724"/>
<rect x="714.9" y="288.0" width="38.2" height="5.5" fill="#3a2919"/>
<rect x="601.2" y="296.0" width="30.7" height="5.5" fill="#493624"/>
<rect x="633.4" y="296.0" width="32.2" height="5.5" fill="#4b3825"/>
<rect x="667.1" y="296.0" width="19.7" height="5.5" fill="#3d2b1a"/>
<rect x="688.3" y="296.0" width="14.2" height="5.5" fill="#493624"/>
<rect x="704.0" y="296.0" width="18.7" height="5.5" fill="#3d2b1a"/>
<rect x="724.2" y="296.0" width="37.6" height="5.5" fill="#483523"/>
<rect x="598.2" y="304.0" width="29.9" height="5.5" fill="#463422"/>
<rect x="629.6" y="304.0" width="30.9" height="5.5" fill="#3e2d1b"/>
<rect x="662.0" y="304.0" width="15.1" height="5.5" fill="#372716"/>
<rect x="678.6" y="304.0" width="13.9" height="5.5" fill="#402e1d"/>
<rect x="693.9" y="304.0" width="17.1" height="5.5" fill="#392817"/>
<rect x="712.5" y="304.0" width="25.8" height="5.5" fill="#513d29"/>
</g>
</g>
<g filter="url(#sf)">
<path d="M316 50 L352 50 L356 90 L354 120 L356 140 L340 146 L322 146 L318 128 L315 90 Z" fill="#861c14"/>
<path d="M330 60 L350 60 L352 130 L338 140 Z" fill="#6a120c" opacity=".6"/><path d="M322 70 L332 72 L334 120 L324 118 Z" fill="#a83020" opacity=".5"/>
<path d="M320 142 L328 143 L327 156 L319 155 Z" fill="#c9a07e"/>
<path d="M340 144 L348 144 L350 162 L342 163 Z" fill="#c49a78"/>
<ellipse cx="320" cy="156" rx="6" ry="3" fill="#2e241a"/><ellipse cx="346" cy="164" rx="6" ry="3" fill="#2e241a"/>
<path d="M373 108 L412 110 L414 150 L412 185 L402 192 L384 192 L376 170 L372 140 Z" fill="#b8223a"/>
<path d="M395 120 L410 120 L411 180 L398 185 Z" fill="#8a1428" opacity=".5"/>
<path d="M386 188 L395 189 L395 198 L386 197 Z" fill="#c8a080"/>
<ellipse cx="389" cy="198" rx="7" ry="3" fill="#2a2018"/>
<path d="M406 192 L440 190 L452 212 L450 250 L446 280 L438 298 L424 300 L416 272 L410 236 L400 214 Z" fill="#5a1a1a"/>
<path d="M398 212 L408 206 L414 220 L401 224 Z" fill="#5a1a1a"/>
<path d="M428 296 L438 297 L437 303 L427 303 Z" fill="#c8a080"/>
</g>
<g filter="url(#sf)">
<ellipse cx="344" cy="30" rx="43" ry="27" transform="rotate(-4 344 30)" fill="#dc8cb0" stroke="#6a3048" stroke-width="1.2"/>
<g transform="rotate(-4 344 30)" fill="none" stroke="#8a3a60" opacity=".75">
<ellipse cx="344" cy="30" rx="36" ry="22" stroke-width="1" stroke-dasharray="4 2"/>
<ellipse cx="344" cy="30" rx="27" ry="16" stroke-width="1.4" stroke-dasharray="2 3"/>
<ellipse cx="344" cy="30" rx="17" ry="10" stroke-width="1"/>
</g>
<ellipse cx="344" cy="29" rx="9" ry="6.5" fill="#2a2228"/>
<ellipse cx="397.5" cy="75.5" rx="41" ry="37.5" fill="#e05670" stroke="#5a2030" stroke-width="1.6"/>
<path d="M397.5 75.5 L437.5 75.5 M397.5 75.5 L436.9 81.8 M397.5 75.5 L435.1 88.0 M397.5 75.5 L432.1 93.8 M397.5 75.5 L428.1 99.0 M397.5 75.5 L423.2 103.5 M397.5 75.5 L417.5 107.1 M397.5 75.5 L411.2 109.8 M397.5 75.5 L404.4 111.4 M397.5 75.5 L397.5 112.0 M397.5 75.5 L390.6 111.4 M397.5 75.5 L383.8 109.8 M397.5 75.5 L377.5 107.1 M397.5 75.5 L371.8 103.5 M397.5 75.5 L366.9 99.0 M397.5 75.5 L362.9 93.8 M397.5 75.5 L359.9 88.0 M397.5 75.5 L358.1 81.8 M397.5 75.5 L357.5 75.5 M397.5 75.5 L358.1 69.2 M397.5 75.5 L359.9 63.0 M397.5 75.5 L362.9 57.2 M397.5 75.5 L366.9 52.0 M397.5 75.5 L371.8 47.5 M397.5 75.5 L377.5 43.9 M397.5 75.5 L383.8 41.2 M397.5 75.5 L390.6 39.6 M397.5 75.5 L397.5 39.0 M397.5 75.5 L404.4 39.6 M397.5 75.5 L411.2 41.2 M397.5 75.5 L417.5 43.9 M397.5 75.5 L423.2 47.5 M397.5 75.5 L428.1 52.0 M397.5 75.5 L432.1 57.3 M397.5 75.5 L435.1 63.0 M397.5 75.5 L436.9 69.2" stroke="#b83a54" stroke-width=".7" opacity=".55"/>
<circle cx="397.5" cy="75.5" r="3" fill="#1e1416"/>
<ellipse cx="438" cy="175" rx="39" ry="26" transform="rotate(38 438 175)" fill="#e87588" stroke="#7a3040" stroke-width="1.6"/>
<path transform="rotate(38 438 175)" d="M438 175 L476.0 175.0 M438 175 L474.7 181.5 M438 175 L470.9 187.5 M438 175 L464.9 192.7 M438 175 L457.0 196.7 M438 175 L447.8 199.1 M438 175 L438.0 200.0 M438 175 L428.2 199.1 M438 175 L419.0 196.7 M438 175 L411.1 192.7 M438 175 L405.1 187.5 M438 175 L401.3 181.5 M438 175 L400.0 175.0 M438 175 L401.3 168.5 M438 175 L405.1 162.5 M438 175 L411.1 157.3 M438 175 L419.0 153.3 M438 175 L428.2 150.9 M438 175 L438.0 150.0 M438 175 L447.8 150.9 M438 175 L457.0 153.3 M438 175 L464.9 157.3 M438 175 L470.9 162.5 M438 175 L474.7 168.5" stroke="#c04a62" stroke-width=".7" opacity=".45"/>
<circle cx="444" cy="168" r="3" fill="#1e1416"/>
</g>
<rect width="728" height="306" fill="#2a1e10" opacity=".05"/>
</g></svg>

<div class="t" id="c1" style="left:804px;top:754.5px;font-size:23px;letter-spacing:-0.54px;color:#333;">Leaving your comfort zone might lead you to such beautiful sceneries</div>
<div class="t" id="c2" style="left:1076px;top:790.5px;font-size:23px;letter-spacing:-0.1px;color:#333;">like this one.</div>
</body></html>
